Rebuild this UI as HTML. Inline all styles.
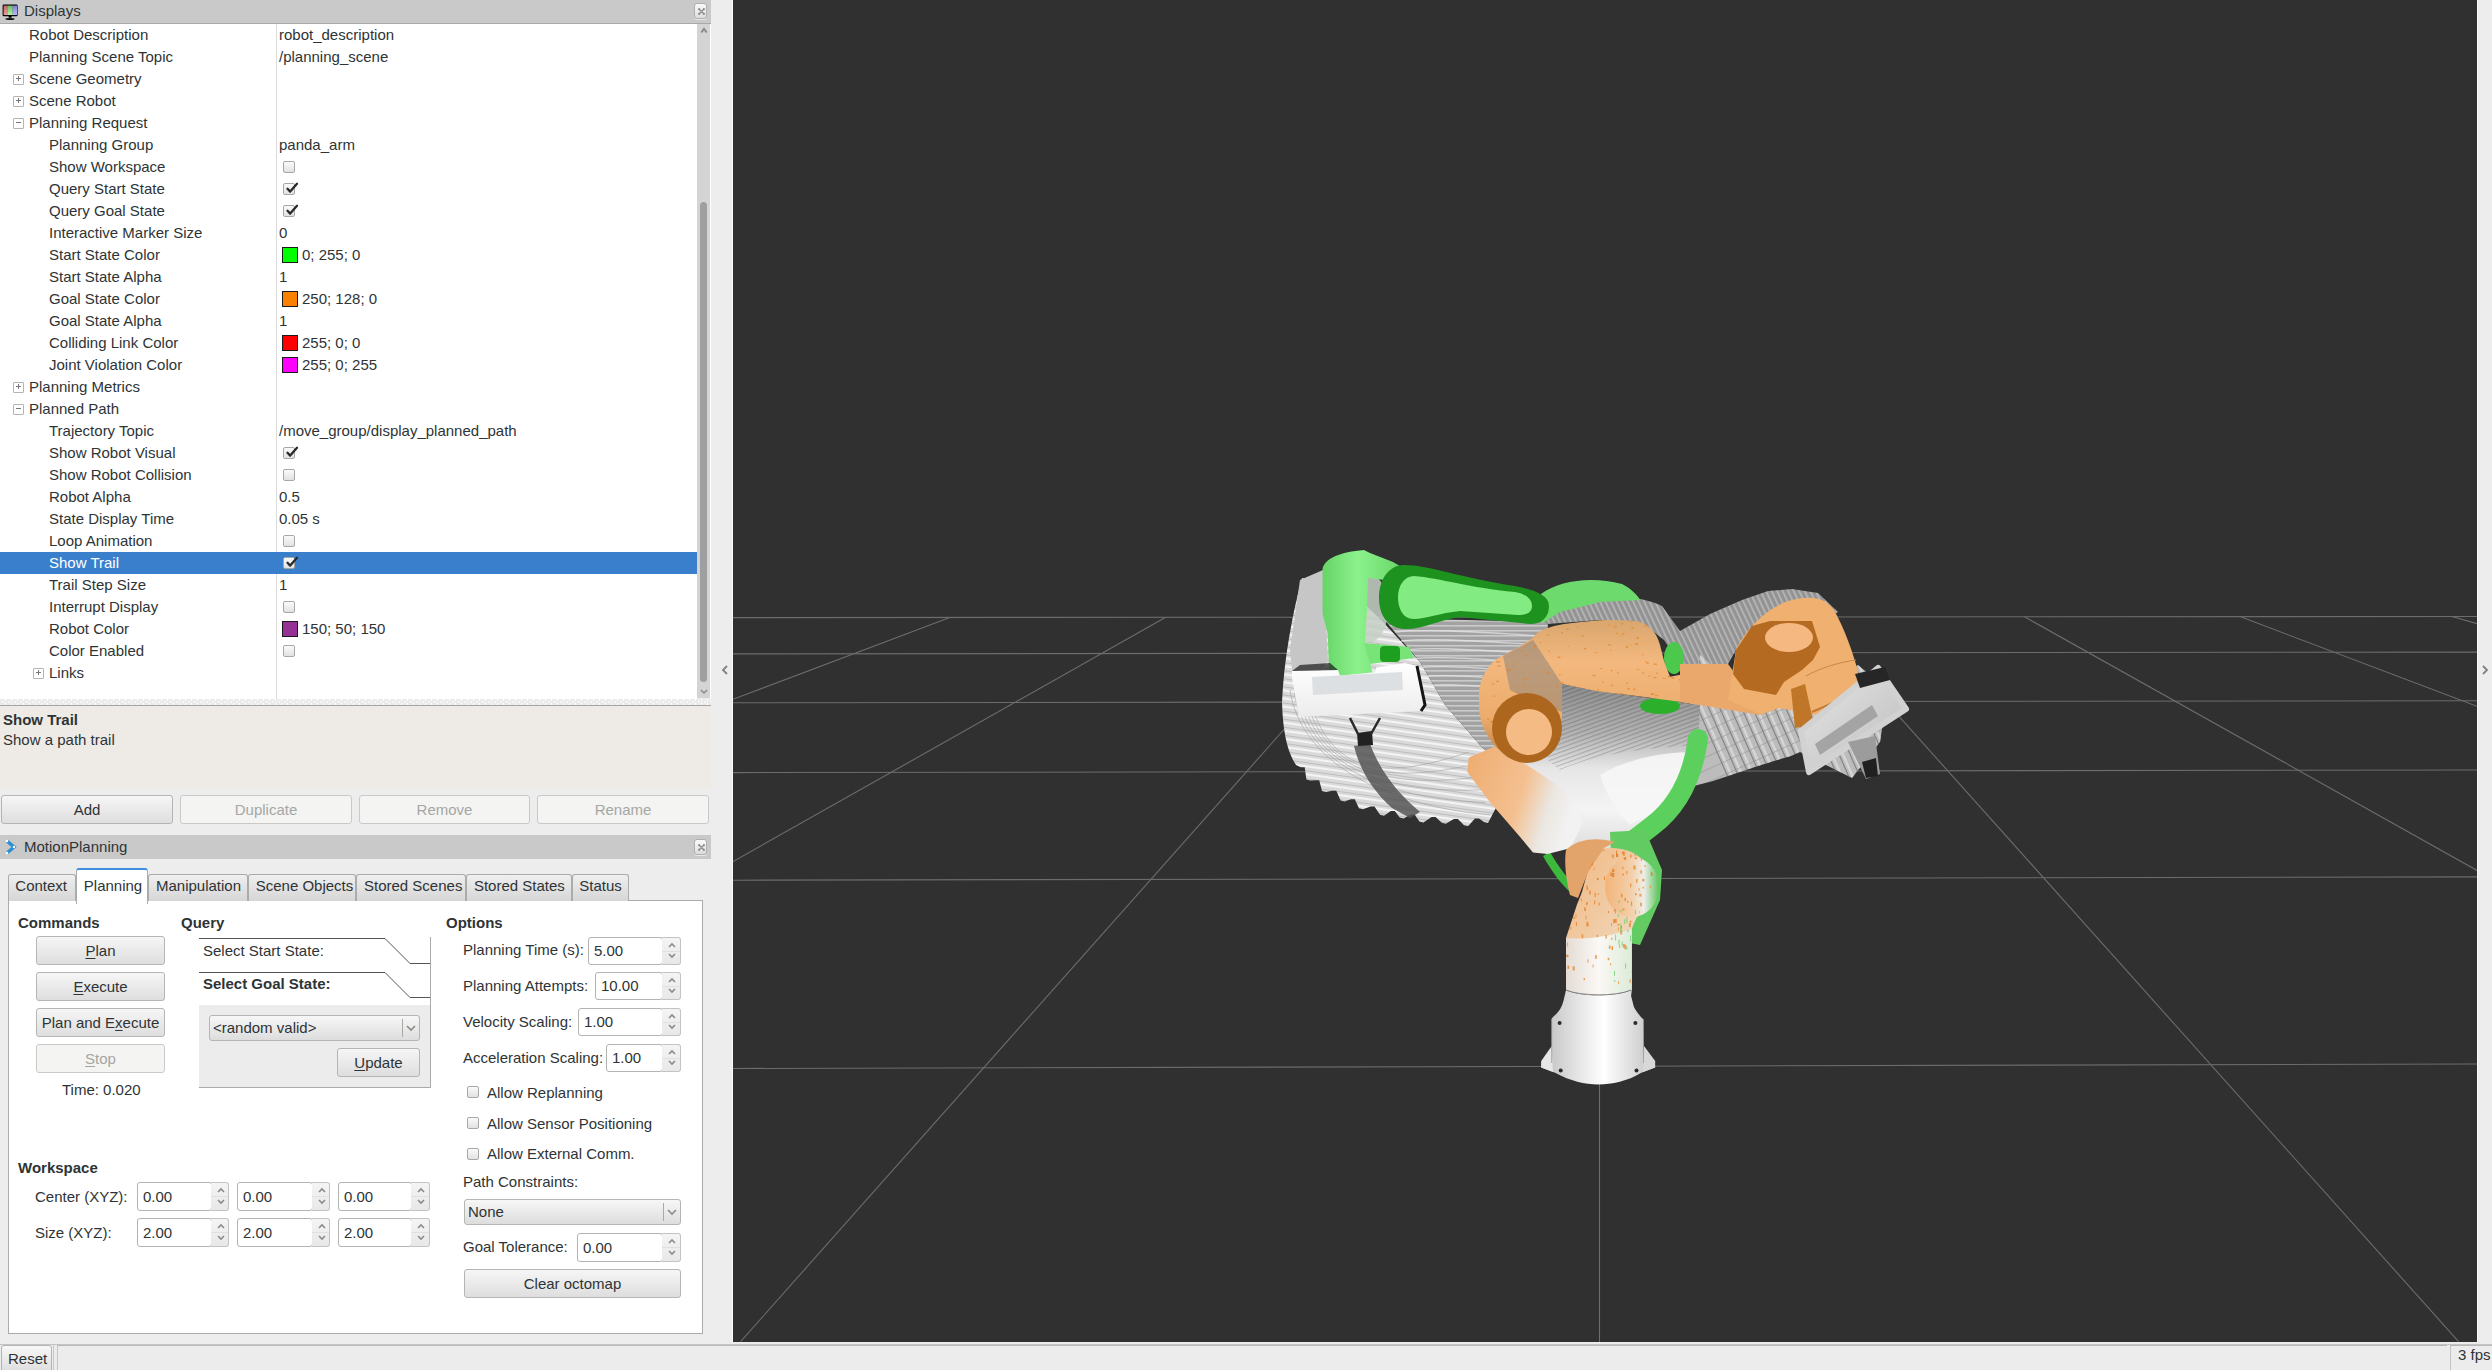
<!DOCTYPE html><html><head><meta charset="utf-8"><style>html,body{margin:0;padding:0;}body{width:2492px;height:1370px;overflow:hidden;position:relative;background:#ededed;font-family:"Liberation Sans",sans-serif;font-size:15px;color:#2e3436;}</style></head><body>
<div style="position:absolute;left:0px;top:0px;width:711px;height:23px;background:#c9c9c9;"></div>
<div style="position:absolute;left:0px;top:23px;width:711px;height:1px;background:#a9a9a9;"></div>
<svg style="position:absolute;left:2px;top:3px" width="16" height="17" viewBox="0 0 16 17"><defs><linearGradient id="mr" x1="0" y1="0" x2="0" y2="1"><stop offset="0" stop-color="#b86a6a"/><stop offset="1" stop-color="#f09a9a"/></linearGradient><linearGradient id="mg" x1="0" y1="0" x2="0" y2="1"><stop offset="0" stop-color="#6cb86c"/><stop offset="1" stop-color="#b0f4a8"/></linearGradient><linearGradient id="mb" x1="0" y1="0" x2="0" y2="1"><stop offset="0" stop-color="#8080d0"/><stop offset="1" stop-color="#b8b8ff"/></linearGradient></defs><rect x="0.6" y="1.6" width="15" height="11.6" rx="1.2" fill="#000"/><rect x="1.6" y="2.6" width="4.4" height="9.4" fill="url(#mr)"/><rect x="6" y="2.6" width="4.8" height="9.4" fill="url(#mg)"/><rect x="10.8" y="2.6" width="4.2" height="9.4" fill="url(#mb)"/><path d="M6.5 13 L9.7 13 L9.5 14.8 L6.7 14.8 Z" fill="#000"/><ellipse cx="8" cy="16" rx="4.6" ry="1.0" fill="#111"/></svg>
<div style="position:absolute;left:24px;top:1.60px;font-size:15px;line-height:18px;font-weight:normal;color:#2e3436;white-space:nowrap;">Displays</div>
<div style="position:absolute;left:694px;top:3px;width:11px;height:14px;border:1px solid #aeb1ac;border-radius:3px;background:linear-gradient(#fafafa,#dcdcdc);box-shadow:0 1px 0 #e8e8e8;"></div>
<svg style="position:absolute;left:697.5px;top:7.5px" width="7" height="7" viewBox="0 0 7 7"><path d="M1 1 L6 6 M6 1 L1 6" stroke="#8a8c88" stroke-width="1.3" stroke-linecap="round"/><circle cx="1.2" cy="1.2" r="1" fill="#858782"/><circle cx="5.8" cy="1.2" r="1" fill="#858782"/><circle cx="1.2" cy="5.8" r="1" fill="#858782"/><circle cx="5.8" cy="5.8" r="1" fill="#858782"/><rect x="2.5" y="2.5" width="2" height="2" fill="#a0a39e"/></svg>
<div style="position:absolute;left:0px;top:24px;width:697px;height:675px;background:#ffffff;"></div>
<div style="position:absolute;left:276px;top:24px;width:1px;height:675px;background:#dcdcdc;"></div>
<div style="position:absolute;left:29px;top:25.80px;font-size:15px;line-height:18px;font-weight:normal;color:#2e3436;white-space:nowrap;">Robot Description</div>
<div style="position:absolute;left:279px;top:25.80px;font-size:15px;line-height:18px;font-weight:normal;color:#2e3436;white-space:nowrap;">robot_description</div>
<div style="position:absolute;left:29px;top:47.80px;font-size:15px;line-height:18px;font-weight:normal;color:#2e3436;white-space:nowrap;">Planning Scene Topic</div>
<div style="position:absolute;left:279px;top:47.80px;font-size:15px;line-height:18px;font-weight:normal;color:#2e3436;white-space:nowrap;">/planning_scene</div>
<div style="position:absolute;left:29px;top:69.80px;font-size:15px;line-height:18px;font-weight:normal;color:#2e3436;white-space:nowrap;">Scene Geometry</div>
<div style="position:absolute;left:13px;top:74px;width:9px;height:9px;border:1px solid #b4b4b4;border-radius:1px;background:#fff;"></div>
<div style="position:absolute;left:16px;top:78px;width:5px;height:1px;background:#777;"></div>
<div style="position:absolute;left:18px;top:76px;width:1px;height:5px;background:#777;"></div>
<div style="position:absolute;left:29px;top:91.80px;font-size:15px;line-height:18px;font-weight:normal;color:#2e3436;white-space:nowrap;">Scene Robot</div>
<div style="position:absolute;left:13px;top:96px;width:9px;height:9px;border:1px solid #b4b4b4;border-radius:1px;background:#fff;"></div>
<div style="position:absolute;left:16px;top:100px;width:5px;height:1px;background:#777;"></div>
<div style="position:absolute;left:18px;top:98px;width:1px;height:5px;background:#777;"></div>
<div style="position:absolute;left:29px;top:113.80px;font-size:15px;line-height:18px;font-weight:normal;color:#2e3436;white-space:nowrap;">Planning Request</div>
<div style="position:absolute;left:13px;top:118px;width:9px;height:9px;border:1px solid #b4b4b4;border-radius:1px;background:#fff;"></div>
<div style="position:absolute;left:16px;top:122px;width:5px;height:1px;background:#777;"></div>
<div style="position:absolute;left:49px;top:135.80px;font-size:15px;line-height:18px;font-weight:normal;color:#2e3436;white-space:nowrap;">Planning Group</div>
<div style="position:absolute;left:279px;top:135.80px;font-size:15px;line-height:18px;font-weight:normal;color:#2e3436;white-space:nowrap;">panda_arm</div>
<div style="position:absolute;left:49px;top:157.80px;font-size:15px;line-height:18px;font-weight:normal;color:#2e3436;white-space:nowrap;">Show Workspace</div>
<div style="position:absolute;left:283px;top:161px;width:10px;height:10px;border:1px solid #a6a8a4;border-radius:2px;background:linear-gradient(#fafafa,#e2e2e2);"></div>
<div style="position:absolute;left:49px;top:179.80px;font-size:15px;line-height:18px;font-weight:normal;color:#2e3436;white-space:nowrap;">Query Start State</div>
<div style="position:absolute;left:283px;top:183px;width:10px;height:10px;border:1px solid #a6a8a4;border-radius:2px;background:linear-gradient(#fafafa,#e2e2e2);"><svg width="14" height="13" viewBox="0 0 14 13" style="position:absolute;left:1px;top:-2px"><path d="M2.5 6.8 L5.2 9.6 L12 1.8" fill="none" stroke="#2a2a2a" stroke-width="2.3" stroke-linecap="round" stroke-linejoin="round"/></svg></div>
<div style="position:absolute;left:49px;top:201.80px;font-size:15px;line-height:18px;font-weight:normal;color:#2e3436;white-space:nowrap;">Query Goal State</div>
<div style="position:absolute;left:283px;top:205px;width:10px;height:10px;border:1px solid #a6a8a4;border-radius:2px;background:linear-gradient(#fafafa,#e2e2e2);"><svg width="14" height="13" viewBox="0 0 14 13" style="position:absolute;left:1px;top:-2px"><path d="M2.5 6.8 L5.2 9.6 L12 1.8" fill="none" stroke="#2a2a2a" stroke-width="2.3" stroke-linecap="round" stroke-linejoin="round"/></svg></div>
<div style="position:absolute;left:49px;top:223.80px;font-size:15px;line-height:18px;font-weight:normal;color:#2e3436;white-space:nowrap;">Interactive Marker Size</div>
<div style="position:absolute;left:279px;top:223.80px;font-size:15px;line-height:18px;font-weight:normal;color:#2e3436;white-space:nowrap;">0</div>
<div style="position:absolute;left:49px;top:245.80px;font-size:15px;line-height:18px;font-weight:normal;color:#2e3436;white-space:nowrap;">Start State Color</div>
<div style="position:absolute;left:282px;top:247px;width:14px;height:14px;background:#00ff00;border:1px solid #1a1a1a;"></div>
<div style="position:absolute;left:302px;top:245.80px;font-size:15px;line-height:18px;font-weight:normal;color:#2e3436;white-space:nowrap;">0; 255; 0</div>
<div style="position:absolute;left:49px;top:267.80px;font-size:15px;line-height:18px;font-weight:normal;color:#2e3436;white-space:nowrap;">Start State Alpha</div>
<div style="position:absolute;left:279px;top:267.80px;font-size:15px;line-height:18px;font-weight:normal;color:#2e3436;white-space:nowrap;">1</div>
<div style="position:absolute;left:49px;top:289.80px;font-size:15px;line-height:18px;font-weight:normal;color:#2e3436;white-space:nowrap;">Goal State Color</div>
<div style="position:absolute;left:282px;top:291px;width:14px;height:14px;background:#fa8000;border:1px solid #1a1a1a;"></div>
<div style="position:absolute;left:302px;top:289.80px;font-size:15px;line-height:18px;font-weight:normal;color:#2e3436;white-space:nowrap;">250; 128; 0</div>
<div style="position:absolute;left:49px;top:311.80px;font-size:15px;line-height:18px;font-weight:normal;color:#2e3436;white-space:nowrap;">Goal State Alpha</div>
<div style="position:absolute;left:279px;top:311.80px;font-size:15px;line-height:18px;font-weight:normal;color:#2e3436;white-space:nowrap;">1</div>
<div style="position:absolute;left:49px;top:333.80px;font-size:15px;line-height:18px;font-weight:normal;color:#2e3436;white-space:nowrap;">Colliding Link Color</div>
<div style="position:absolute;left:282px;top:335px;width:14px;height:14px;background:#ff0000;border:1px solid #1a1a1a;"></div>
<div style="position:absolute;left:302px;top:333.80px;font-size:15px;line-height:18px;font-weight:normal;color:#2e3436;white-space:nowrap;">255; 0; 0</div>
<div style="position:absolute;left:49px;top:355.80px;font-size:15px;line-height:18px;font-weight:normal;color:#2e3436;white-space:nowrap;">Joint Violation Color</div>
<div style="position:absolute;left:282px;top:357px;width:14px;height:14px;background:#ff00ff;border:1px solid #1a1a1a;"></div>
<div style="position:absolute;left:302px;top:355.80px;font-size:15px;line-height:18px;font-weight:normal;color:#2e3436;white-space:nowrap;">255; 0; 255</div>
<div style="position:absolute;left:29px;top:377.80px;font-size:15px;line-height:18px;font-weight:normal;color:#2e3436;white-space:nowrap;">Planning Metrics</div>
<div style="position:absolute;left:13px;top:382px;width:9px;height:9px;border:1px solid #b4b4b4;border-radius:1px;background:#fff;"></div>
<div style="position:absolute;left:16px;top:386px;width:5px;height:1px;background:#777;"></div>
<div style="position:absolute;left:18px;top:384px;width:1px;height:5px;background:#777;"></div>
<div style="position:absolute;left:29px;top:399.80px;font-size:15px;line-height:18px;font-weight:normal;color:#2e3436;white-space:nowrap;">Planned Path</div>
<div style="position:absolute;left:13px;top:404px;width:9px;height:9px;border:1px solid #b4b4b4;border-radius:1px;background:#fff;"></div>
<div style="position:absolute;left:16px;top:408px;width:5px;height:1px;background:#777;"></div>
<div style="position:absolute;left:49px;top:421.80px;font-size:15px;line-height:18px;font-weight:normal;color:#2e3436;white-space:nowrap;">Trajectory Topic</div>
<div style="position:absolute;left:279px;top:421.80px;font-size:15px;line-height:18px;font-weight:normal;color:#2e3436;white-space:nowrap;">/move_group/display_planned_path</div>
<div style="position:absolute;left:49px;top:443.80px;font-size:15px;line-height:18px;font-weight:normal;color:#2e3436;white-space:nowrap;">Show Robot Visual</div>
<div style="position:absolute;left:283px;top:447px;width:10px;height:10px;border:1px solid #a6a8a4;border-radius:2px;background:linear-gradient(#fafafa,#e2e2e2);"><svg width="14" height="13" viewBox="0 0 14 13" style="position:absolute;left:1px;top:-2px"><path d="M2.5 6.8 L5.2 9.6 L12 1.8" fill="none" stroke="#2a2a2a" stroke-width="2.3" stroke-linecap="round" stroke-linejoin="round"/></svg></div>
<div style="position:absolute;left:49px;top:465.80px;font-size:15px;line-height:18px;font-weight:normal;color:#2e3436;white-space:nowrap;">Show Robot Collision</div>
<div style="position:absolute;left:283px;top:469px;width:10px;height:10px;border:1px solid #a6a8a4;border-radius:2px;background:linear-gradient(#fafafa,#e2e2e2);"></div>
<div style="position:absolute;left:49px;top:487.80px;font-size:15px;line-height:18px;font-weight:normal;color:#2e3436;white-space:nowrap;">Robot Alpha</div>
<div style="position:absolute;left:279px;top:487.80px;font-size:15px;line-height:18px;font-weight:normal;color:#2e3436;white-space:nowrap;">0.5</div>
<div style="position:absolute;left:49px;top:509.80px;font-size:15px;line-height:18px;font-weight:normal;color:#2e3436;white-space:nowrap;">State Display Time</div>
<div style="position:absolute;left:279px;top:509.80px;font-size:15px;line-height:18px;font-weight:normal;color:#2e3436;white-space:nowrap;">0.05 s</div>
<div style="position:absolute;left:49px;top:531.80px;font-size:15px;line-height:18px;font-weight:normal;color:#2e3436;white-space:nowrap;">Loop Animation</div>
<div style="position:absolute;left:283px;top:535px;width:10px;height:10px;border:1px solid #a6a8a4;border-radius:2px;background:linear-gradient(#fafafa,#e2e2e2);"></div>
<div style="position:absolute;left:0px;top:552px;width:697px;height:22px;background:#3a7fcc;"></div>
<div style="position:absolute;left:49px;top:553.80px;font-size:15px;line-height:18px;font-weight:normal;color:#ffffff;white-space:nowrap;">Show Trail</div>
<div style="position:absolute;left:283px;top:557px;width:10px;height:10px;border:1px solid #a6a8a4;border-radius:2px;background:linear-gradient(#fafafa,#e2e2e2);"><svg width="14" height="13" viewBox="0 0 14 13" style="position:absolute;left:1px;top:-2px"><path d="M2.5 6.8 L5.2 9.6 L12 1.8" fill="none" stroke="#2a2a2a" stroke-width="2.3" stroke-linecap="round" stroke-linejoin="round"/></svg></div>
<div style="position:absolute;left:49px;top:575.80px;font-size:15px;line-height:18px;font-weight:normal;color:#2e3436;white-space:nowrap;">Trail Step Size</div>
<div style="position:absolute;left:279px;top:575.80px;font-size:15px;line-height:18px;font-weight:normal;color:#2e3436;white-space:nowrap;">1</div>
<div style="position:absolute;left:49px;top:597.80px;font-size:15px;line-height:18px;font-weight:normal;color:#2e3436;white-space:nowrap;">Interrupt Display</div>
<div style="position:absolute;left:283px;top:601px;width:10px;height:10px;border:1px solid #a6a8a4;border-radius:2px;background:linear-gradient(#fafafa,#e2e2e2);"></div>
<div style="position:absolute;left:49px;top:619.80px;font-size:15px;line-height:18px;font-weight:normal;color:#2e3436;white-space:nowrap;">Robot Color</div>
<div style="position:absolute;left:282px;top:621px;width:14px;height:14px;background:#963296;border:1px solid #1a1a1a;"></div>
<div style="position:absolute;left:302px;top:619.80px;font-size:15px;line-height:18px;font-weight:normal;color:#2e3436;white-space:nowrap;">150; 50; 150</div>
<div style="position:absolute;left:49px;top:641.80px;font-size:15px;line-height:18px;font-weight:normal;color:#2e3436;white-space:nowrap;">Color Enabled</div>
<div style="position:absolute;left:283px;top:645px;width:10px;height:10px;border:1px solid #a6a8a4;border-radius:2px;background:linear-gradient(#fafafa,#e2e2e2);"></div>
<div style="position:absolute;left:49px;top:663.80px;font-size:15px;line-height:18px;font-weight:normal;color:#2e3436;white-space:nowrap;">Links</div>
<div style="position:absolute;left:33px;top:668px;width:9px;height:9px;border:1px solid #b4b4b4;border-radius:1px;background:#fff;"></div>
<div style="position:absolute;left:36px;top:672px;width:5px;height:1px;background:#777;"></div>
<div style="position:absolute;left:38px;top:670px;width:1px;height:5px;background:#777;"></div>
<div style="position:absolute;left:697px;top:24px;width:13px;height:674px;background:#d4d4d4;"></div>
<div style="position:absolute;left:700px;top:202px;width:7px;height:480px;background:#9e9fa1;border-radius:3.5px;"></div>
<svg style="position:absolute;left:699px;top:26px" width="10" height="8" viewBox="0 0 10 8"><path d="M2.3 6.5 L5 3 L7.7 6.5" fill="none" stroke="#8a8c88" stroke-width="2"/></svg>
<svg style="position:absolute;left:699px;top:688px" width="10" height="8" viewBox="0 0 10 8"><path d="M2 2 L5 5 L8 2" fill="none" stroke="#8a8c88" stroke-width="1.5"/></svg>
<div style="position:absolute;left:710px;top:24px;width:1px;height:675px;background:#ffffff;"></div>
<svg style="position:absolute;left:0;top:699px" width="711" height="6"><defs><pattern id="spl" width="6" height="4" patternUnits="userSpaceOnUse" y="1"><rect width="6" height="4" fill="#ebebeb"/><rect x="5" y="0" width="1" height="1" fill="#fff"/><rect x="2" y="1" width="1" height="1" fill="#fff"/><rect x="3" y="2" width="1" height="1" fill="#fff"/><rect x="5" y="3" width="1" height="1" fill="#fff"/></pattern></defs><rect width="711" height="6" fill="url(#spl)"/></svg>
<div style="position:absolute;left:0px;top:705px;width:711px;height:1px;background:#a4a4a4;"></div>
<div style="position:absolute;left:0px;top:706px;width:711px;height:82px;background:#eeebe7;"></div>
<div style="position:absolute;left:3px;top:710.50px;font-size:15px;line-height:18px;font-weight:bold;color:#2e3436;white-space:nowrap;">Show Trail</div>
<div style="position:absolute;left:3px;top:730.70px;font-size:15px;line-height:18px;font-weight:normal;color:#2e3436;white-space:nowrap;">Show a path trail</div>
<div style="position:absolute;left:1px;top:795px;width:170px;height:27px;background:linear-gradient(#f6f6f6,#dedede);border:1px solid #b4b6b2;border-radius:3px;"></div>
<div style="position:absolute;left:1px;top:795px;width:172px;height:29px;line-height:29px;text-align:center;font-size:15px;color:#2e3436;white-space:nowrap;">Add</div>
<div style="position:absolute;left:180px;top:795px;width:170px;height:27px;background:#f4f4f3;border:1px solid #c9cac8;border-radius:3px;"></div>
<div style="position:absolute;left:180px;top:795px;width:172px;height:29px;line-height:29px;text-align:center;font-size:15px;color:#a5a7a3;white-space:nowrap;">Duplicate</div>
<div style="position:absolute;left:359px;top:795px;width:169px;height:27px;background:#f4f4f3;border:1px solid #c9cac8;border-radius:3px;"></div>
<div style="position:absolute;left:359px;top:795px;width:171px;height:29px;line-height:29px;text-align:center;font-size:15px;color:#a5a7a3;white-space:nowrap;">Remove</div>
<div style="position:absolute;left:537px;top:795px;width:170px;height:27px;background:#f4f4f3;border:1px solid #c9cac8;border-radius:3px;"></div>
<div style="position:absolute;left:537px;top:795px;width:172px;height:29px;line-height:29px;text-align:center;font-size:15px;color:#a5a7a3;white-space:nowrap;">Rename</div>
<div style="position:absolute;left:0px;top:835px;width:711px;height:24px;background:#c9c9c9;"></div>
<svg style="position:absolute;left:4px;top:838px" width="14" height="18" viewBox="0 0 14 18"><path d="M3 3 L10 9 L3 15" fill="none" stroke="#2b8fd0" stroke-width="3.4" stroke-linejoin="miter"/><circle cx="3" cy="3" r="1.3" fill="#fff"/><circle cx="3" cy="15" r="1.3" fill="#fff"/><circle cx="10" cy="9" r="1.2" fill="#fff"/></svg>
<div style="position:absolute;left:24px;top:838.30px;font-size:15px;line-height:18px;font-weight:normal;color:#2e3436;white-space:nowrap;">MotionPlanning</div>
<div style="position:absolute;left:694px;top:839px;width:11px;height:14px;border:1px solid #aeb1ac;border-radius:3px;background:linear-gradient(#fafafa,#dcdcdc);box-shadow:0 1px 0 #e8e8e8;"></div>
<svg style="position:absolute;left:697.5px;top:843.5px" width="7" height="7" viewBox="0 0 7 7"><path d="M1 1 L6 6 M6 1 L1 6" stroke="#8a8c88" stroke-width="1.3" stroke-linecap="round"/><circle cx="1.2" cy="1.2" r="1" fill="#858782"/><circle cx="5.8" cy="1.2" r="1" fill="#858782"/><circle cx="1.2" cy="5.8" r="1" fill="#858782"/><circle cx="5.8" cy="5.8" r="1" fill="#858782"/><rect x="2.5" y="2.5" width="2" height="2" fill="#a0a39e"/></svg>
<div style="position:absolute;left:8px;top:900px;width:693px;height:432px;background:#ffffff;border:1px solid #aaacaa;"></div>
<div style="position:absolute;left:8px;top:874px;width:66px;height:26px;background:linear-gradient(#efefef,#d6d6d6);border:1px solid #aaacaa;border-bottom:none;border-radius:3px 3px 0 0;"></div>
<div style="position:absolute;left:15.3px;top:877.30px;font-size:15px;line-height:18px;font-weight:normal;color:#2e3436;white-space:nowrap;">Context</div>
<div style="position:absolute;left:76px;top:868px;width:70px;height:34px;background:#ffffff;border:1px solid #aaacaa;border-bottom:none;border-top:2px solid #3d8ee0;border-radius:3px 3px 0 0;"></div>
<div style="position:absolute;left:83.8px;top:876.50px;font-size:15px;line-height:18px;font-weight:normal;color:#2e3436;white-space:nowrap;">Planning</div>
<div style="position:absolute;left:148px;top:874px;width:98px;height:26px;background:linear-gradient(#efefef,#d6d6d6);border:1px solid #aaacaa;border-bottom:none;border-radius:3px 3px 0 0;"></div>
<div style="position:absolute;left:156px;top:877.30px;font-size:15px;line-height:18px;font-weight:normal;color:#2e3436;white-space:nowrap;">Manipulation</div>
<div style="position:absolute;left:248px;top:874px;width:106px;height:26px;background:linear-gradient(#efefef,#d6d6d6);border:1px solid #aaacaa;border-bottom:none;border-radius:3px 3px 0 0;"></div>
<div style="position:absolute;left:255.7px;top:877.30px;font-size:15px;line-height:18px;font-weight:normal;color:#2e3436;white-space:nowrap;">Scene Objects</div>
<div style="position:absolute;left:356px;top:874px;width:108px;height:26px;background:linear-gradient(#efefef,#d6d6d6);border:1px solid #aaacaa;border-bottom:none;border-radius:3px 3px 0 0;"></div>
<div style="position:absolute;left:364px;top:877.30px;font-size:15px;line-height:18px;font-weight:normal;color:#2e3436;white-space:nowrap;">Stored Scenes</div>
<div style="position:absolute;left:466px;top:874px;width:104px;height:26px;background:linear-gradient(#efefef,#d6d6d6);border:1px solid #aaacaa;border-bottom:none;border-radius:3px 3px 0 0;"></div>
<div style="position:absolute;left:473.9px;top:877.30px;font-size:15px;line-height:18px;font-weight:normal;color:#2e3436;white-space:nowrap;">Stored States</div>
<div style="position:absolute;left:572px;top:874px;width:55px;height:26px;background:linear-gradient(#efefef,#d6d6d6);border:1px solid #aaacaa;border-bottom:none;border-radius:3px 3px 0 0;"></div>
<div style="position:absolute;left:579.3px;top:877.30px;font-size:15px;line-height:18px;font-weight:normal;color:#2e3436;white-space:nowrap;">Status</div>
<div style="position:absolute;left:18px;top:913.80px;font-size:15px;line-height:18px;font-weight:bold;color:#2e3436;white-space:nowrap;">Commands</div>
<div style="position:absolute;left:181px;top:913.80px;font-size:15px;line-height:18px;font-weight:bold;color:#2e3436;white-space:nowrap;">Query</div>
<div style="position:absolute;left:446px;top:913.80px;font-size:15px;line-height:18px;font-weight:bold;color:#2e3436;white-space:nowrap;">Options</div>
<div style="position:absolute;left:36px;top:936px;width:127px;height:27px;background:linear-gradient(#f6f6f6,#dedede);border:1px solid #b4b6b2;border-radius:3px;"></div>
<div style="position:absolute;left:36px;top:936px;width:129px;height:29px;line-height:29px;text-align:center;font-size:15px;color:#2e3436;white-space:nowrap;"><span style="text-decoration:underline;text-underline-offset:2px">P</span>lan</div>
<div style="position:absolute;left:36px;top:972px;width:127px;height:27px;background:linear-gradient(#f6f6f6,#dedede);border:1px solid #b4b6b2;border-radius:3px;"></div>
<div style="position:absolute;left:36px;top:972px;width:129px;height:29px;line-height:29px;text-align:center;font-size:15px;color:#2e3436;white-space:nowrap;"><span style="text-decoration:underline;text-underline-offset:2px">E</span>xecute</div>
<div style="position:absolute;left:36px;top:1008px;width:127px;height:27px;background:linear-gradient(#f6f6f6,#dedede);border:1px solid #b4b6b2;border-radius:3px;"></div>
<div style="position:absolute;left:36px;top:1008px;width:129px;height:29px;line-height:29px;text-align:center;font-size:15px;color:#2e3436;white-space:nowrap;">Plan and E<span style="text-decoration:underline;text-underline-offset:2px">x</span>ecute</div>
<div style="position:absolute;left:36px;top:1044px;width:127px;height:27px;background:#f4f4f3;border:1px solid #c9cac8;border-radius:3px;"></div>
<div style="position:absolute;left:36px;top:1044px;width:129px;height:29px;line-height:29px;text-align:center;font-size:15px;color:#a5a7a3;white-space:nowrap;"><span style="text-decoration:underline;text-underline-offset:2px">S</span>top</div>
<div style="position:absolute;left:62px;top:1080.80px;font-size:15px;line-height:18px;font-weight:normal;color:#2e3436;white-space:nowrap;">Time: 0.020</div>
<div style="position:absolute;left:199px;top:1005px;width:231px;height:82px;background:#ececec;"></div>
<svg style="position:absolute;left:190px;top:930px" width="250" height="170" viewBox="190 930 250 170"><path d="M199 938.5 L385 938.5 L410 963.5 L430.5 963.5" fill="none" stroke="#555" stroke-width="1"/><path d="M199 972.5 L385 972.5 L410 997.5 L430.5 997.5" fill="none" stroke="#555" stroke-width="1"/><path d="M430.5 937 L430.5 1087.5 L199 1087.5" fill="none" stroke="#a9aba8" stroke-width="1"/></svg>
<div style="position:absolute;left:203px;top:941.80px;font-size:15px;line-height:18px;font-weight:normal;color:#2e3436;white-space:nowrap;">Select Start State:</div>
<div style="position:absolute;left:203px;top:975.20px;font-size:15px;line-height:18px;font-weight:bold;color:#2e3436;white-space:nowrap;">Select Goal State:</div>
<div style="position:absolute;left:209px;top:1015px;width:209px;height:24px;border:1px solid #b4b6b2;border-radius:3px;background:linear-gradient(#f7f7f7,#dddddd);"></div>
<div style="position:absolute;left:402px;top:1019px;width:1px;height:18px;background:#a8aaa6;"></div>
<svg style="position:absolute;left:405.0px;top:1024.0px" width="12" height="8" viewBox="0 0 12 8"><path d="M2 2 L6 6 L10 2" fill="none" stroke="#8a8c88" stroke-width="1.6"/></svg>
<div style="position:absolute;left:213px;top:1019.30px;font-size:15px;line-height:18px;font-weight:normal;color:#2e3436;white-space:nowrap;">&lt;random valid&gt;</div>
<div style="position:absolute;left:337px;top:1048px;width:81px;height:27px;background:linear-gradient(#f6f6f6,#dedede);border:1px solid #b4b6b2;border-radius:3px;"></div>
<div style="position:absolute;left:337px;top:1048px;width:83px;height:29px;line-height:29px;text-align:center;font-size:15px;color:#2e3436;white-space:nowrap;"><span style="text-decoration:underline;text-underline-offset:2px">U</span>pdate</div>
<div style="position:absolute;left:463px;top:941.30px;font-size:15px;line-height:18px;font-weight:normal;color:#2e3436;white-space:nowrap;">Planning Time (s):</div>
<div style="position:absolute;left:588px;top:937px;width:73px;height:26px;border:1px solid #b2b4b0;border-radius:3px;background:#fff;"></div>
<div style="position:absolute;left:662px;top:937px;width:18px;height:26px;border:1px solid #c2c4c0;border-left:none;border-radius:0 3px 3px 0;background:linear-gradient(#f4f4f4,#e8e8e8);"></div>
<div style="position:absolute;left:662px;top:951px;width:18px;height:1px;background:#e0e0e0;"></div>
<svg style="position:absolute;left:667.0px;top:941px" width="10" height="20" viewBox="0 0 10 20"><path d="M2 6 L5 3 L8 6" fill="none" stroke="#8a8c88" stroke-width="1.6"/><path d="M2 13 L5 16 L8 13" fill="none" stroke="#8a8c88" stroke-width="1.6"/></svg>
<div style="position:absolute;left:594px;top:942.30px;font-size:15px;line-height:18px;font-weight:normal;color:#2e3436;white-space:nowrap;">5.00</div>
<div style="position:absolute;left:463px;top:977.30px;font-size:15px;line-height:18px;font-weight:normal;color:#2e3436;white-space:nowrap;">Planning Attempts:</div>
<div style="position:absolute;left:595px;top:972px;width:66px;height:26px;border:1px solid #b2b4b0;border-radius:3px;background:#fff;"></div>
<div style="position:absolute;left:662px;top:972px;width:18px;height:26px;border:1px solid #c2c4c0;border-left:none;border-radius:0 3px 3px 0;background:linear-gradient(#f4f4f4,#e8e8e8);"></div>
<div style="position:absolute;left:662px;top:986px;width:18px;height:1px;background:#e0e0e0;"></div>
<svg style="position:absolute;left:667.0px;top:976px" width="10" height="20" viewBox="0 0 10 20"><path d="M2 6 L5 3 L8 6" fill="none" stroke="#8a8c88" stroke-width="1.6"/><path d="M2 13 L5 16 L8 13" fill="none" stroke="#8a8c88" stroke-width="1.6"/></svg>
<div style="position:absolute;left:601px;top:977.30px;font-size:15px;line-height:18px;font-weight:normal;color:#2e3436;white-space:nowrap;">10.00</div>
<div style="position:absolute;left:463px;top:1013.30px;font-size:15px;line-height:18px;font-weight:normal;color:#2e3436;white-space:nowrap;">Velocity Scaling:</div>
<div style="position:absolute;left:578px;top:1008px;width:83px;height:26px;border:1px solid #b2b4b0;border-radius:3px;background:#fff;"></div>
<div style="position:absolute;left:662px;top:1008px;width:18px;height:26px;border:1px solid #c2c4c0;border-left:none;border-radius:0 3px 3px 0;background:linear-gradient(#f4f4f4,#e8e8e8);"></div>
<div style="position:absolute;left:662px;top:1022px;width:18px;height:1px;background:#e0e0e0;"></div>
<svg style="position:absolute;left:667.0px;top:1012px" width="10" height="20" viewBox="0 0 10 20"><path d="M2 6 L5 3 L8 6" fill="none" stroke="#8a8c88" stroke-width="1.6"/><path d="M2 13 L5 16 L8 13" fill="none" stroke="#8a8c88" stroke-width="1.6"/></svg>
<div style="position:absolute;left:584px;top:1013.30px;font-size:15px;line-height:18px;font-weight:normal;color:#2e3436;white-space:nowrap;">1.00</div>
<div style="position:absolute;left:463px;top:1049.30px;font-size:15px;line-height:18px;font-weight:normal;color:#2e3436;white-space:nowrap;">Acceleration Scaling:</div>
<div style="position:absolute;left:606px;top:1044px;width:55px;height:26px;border:1px solid #b2b4b0;border-radius:3px;background:#fff;"></div>
<div style="position:absolute;left:662px;top:1044px;width:18px;height:26px;border:1px solid #c2c4c0;border-left:none;border-radius:0 3px 3px 0;background:linear-gradient(#f4f4f4,#e8e8e8);"></div>
<div style="position:absolute;left:662px;top:1058px;width:18px;height:1px;background:#e0e0e0;"></div>
<svg style="position:absolute;left:667.0px;top:1048px" width="10" height="20" viewBox="0 0 10 20"><path d="M2 6 L5 3 L8 6" fill="none" stroke="#8a8c88" stroke-width="1.6"/><path d="M2 13 L5 16 L8 13" fill="none" stroke="#8a8c88" stroke-width="1.6"/></svg>
<div style="position:absolute;left:612px;top:1049.30px;font-size:15px;line-height:18px;font-weight:normal;color:#2e3436;white-space:nowrap;">1.00</div>
<div style="position:absolute;left:467px;top:1086px;width:10px;height:10px;border:1px solid #a6a8a4;border-radius:2px;background:linear-gradient(#fafafa,#e2e2e2);"></div>
<div style="position:absolute;left:487px;top:1083.50px;font-size:15px;line-height:18px;font-weight:normal;color:#2e3436;white-space:nowrap;">Allow Replanning</div>
<div style="position:absolute;left:467px;top:1117px;width:10px;height:10px;border:1px solid #a6a8a4;border-radius:2px;background:linear-gradient(#fafafa,#e2e2e2);"></div>
<div style="position:absolute;left:487px;top:1114.70px;font-size:15px;line-height:18px;font-weight:normal;color:#2e3436;white-space:nowrap;">Allow Sensor Positioning</div>
<div style="position:absolute;left:467px;top:1148px;width:10px;height:10px;border:1px solid #a6a8a4;border-radius:2px;background:linear-gradient(#fafafa,#e2e2e2);"></div>
<div style="position:absolute;left:487px;top:1145.40px;font-size:15px;line-height:18px;font-weight:normal;color:#2e3436;white-space:nowrap;">Allow External Comm.</div>
<div style="position:absolute;left:463px;top:1173.40px;font-size:15px;line-height:18px;font-weight:normal;color:#2e3436;white-space:nowrap;">Path Constraints:</div>
<div style="position:absolute;left:464px;top:1199px;width:215px;height:24px;border:1px solid #b4b6b2;border-radius:3px;background:linear-gradient(#f7f7f7,#dddddd);"></div>
<div style="position:absolute;left:663px;top:1203px;width:1px;height:18px;background:#a8aaa6;"></div>
<svg style="position:absolute;left:666.0px;top:1208.0px" width="12" height="8" viewBox="0 0 12 8"><path d="M2 2 L6 6 L10 2" fill="none" stroke="#8a8c88" stroke-width="1.6"/></svg>
<div style="position:absolute;left:468px;top:1203.30px;font-size:15px;line-height:18px;font-weight:normal;color:#2e3436;white-space:nowrap;">None</div>
<div style="position:absolute;left:463px;top:1238.20px;font-size:15px;line-height:18px;font-weight:normal;color:#2e3436;white-space:nowrap;">Goal Tolerance:</div>
<div style="position:absolute;left:577px;top:1233px;width:84px;height:27px;border:1px solid #b2b4b0;border-radius:3px;background:#fff;"></div>
<div style="position:absolute;left:662px;top:1233px;width:18px;height:27px;border:1px solid #c2c4c0;border-left:none;border-radius:0 3px 3px 0;background:linear-gradient(#f4f4f4,#e8e8e8);"></div>
<div style="position:absolute;left:662px;top:1247px;width:18px;height:1px;background:#e0e0e0;"></div>
<svg style="position:absolute;left:667.0px;top:1237px" width="10" height="21" viewBox="0 0 10 21"><path d="M2 6 L5 3 L8 6" fill="none" stroke="#8a8c88" stroke-width="1.6"/><path d="M2 14 L5 17 L8 14" fill="none" stroke="#8a8c88" stroke-width="1.6"/></svg>
<div style="position:absolute;left:583px;top:1238.80px;font-size:15px;line-height:18px;font-weight:normal;color:#2e3436;white-space:nowrap;">0.00</div>
<div style="position:absolute;left:464px;top:1269px;width:215px;height:27px;background:linear-gradient(#f6f6f6,#dedede);border:1px solid #b4b6b2;border-radius:3px;"></div>
<div style="position:absolute;left:464px;top:1269px;width:217px;height:29px;line-height:29px;text-align:center;font-size:15px;color:#2e3436;white-space:nowrap;">Clear octomap</div>
<div style="position:absolute;left:18px;top:1159.30px;font-size:15px;line-height:18px;font-weight:bold;color:#2e3436;white-space:nowrap;">Workspace</div>
<div style="position:absolute;left:35px;top:1188.20px;font-size:15px;line-height:18px;font-weight:normal;color:#2e3436;white-space:nowrap;">Center (XYZ):</div>
<div style="position:absolute;left:35px;top:1223.80px;font-size:15px;line-height:18px;font-weight:normal;color:#2e3436;white-space:nowrap;">Size (XYZ):</div>
<div style="position:absolute;left:137px;top:1182px;width:73px;height:27px;border:1px solid #b2b4b0;border-radius:3px;background:#fff;"></div>
<div style="position:absolute;left:211px;top:1182px;width:17px;height:27px;border:1px solid #c2c4c0;border-left:none;border-radius:0 3px 3px 0;background:linear-gradient(#f4f4f4,#e8e8e8);"></div>
<div style="position:absolute;left:211px;top:1196px;width:17px;height:1px;background:#e0e0e0;"></div>
<svg style="position:absolute;left:215.5px;top:1186px" width="10" height="21" viewBox="0 0 10 21"><path d="M2 6 L5 3 L8 6" fill="none" stroke="#8a8c88" stroke-width="1.6"/><path d="M2 14 L5 17 L8 14" fill="none" stroke="#8a8c88" stroke-width="1.6"/></svg>
<div style="position:absolute;left:143px;top:1187.80px;font-size:15px;line-height:18px;font-weight:normal;color:#2e3436;white-space:nowrap;">0.00</div>
<div style="position:absolute;left:137px;top:1218px;width:73px;height:27px;border:1px solid #b2b4b0;border-radius:3px;background:#fff;"></div>
<div style="position:absolute;left:211px;top:1218px;width:17px;height:27px;border:1px solid #c2c4c0;border-left:none;border-radius:0 3px 3px 0;background:linear-gradient(#f4f4f4,#e8e8e8);"></div>
<div style="position:absolute;left:211px;top:1232px;width:17px;height:1px;background:#e0e0e0;"></div>
<svg style="position:absolute;left:215.5px;top:1222px" width="10" height="21" viewBox="0 0 10 21"><path d="M2 6 L5 3 L8 6" fill="none" stroke="#8a8c88" stroke-width="1.6"/><path d="M2 14 L5 17 L8 14" fill="none" stroke="#8a8c88" stroke-width="1.6"/></svg>
<div style="position:absolute;left:143px;top:1223.80px;font-size:15px;line-height:18px;font-weight:normal;color:#2e3436;white-space:nowrap;">2.00</div>
<div style="position:absolute;left:237px;top:1182px;width:74px;height:27px;border:1px solid #b2b4b0;border-radius:3px;background:#fff;"></div>
<div style="position:absolute;left:312px;top:1182px;width:17px;height:27px;border:1px solid #c2c4c0;border-left:none;border-radius:0 3px 3px 0;background:linear-gradient(#f4f4f4,#e8e8e8);"></div>
<div style="position:absolute;left:312px;top:1196px;width:17px;height:1px;background:#e0e0e0;"></div>
<svg style="position:absolute;left:316.5px;top:1186px" width="10" height="21" viewBox="0 0 10 21"><path d="M2 6 L5 3 L8 6" fill="none" stroke="#8a8c88" stroke-width="1.6"/><path d="M2 14 L5 17 L8 14" fill="none" stroke="#8a8c88" stroke-width="1.6"/></svg>
<div style="position:absolute;left:243px;top:1187.80px;font-size:15px;line-height:18px;font-weight:normal;color:#2e3436;white-space:nowrap;">0.00</div>
<div style="position:absolute;left:237px;top:1218px;width:74px;height:27px;border:1px solid #b2b4b0;border-radius:3px;background:#fff;"></div>
<div style="position:absolute;left:312px;top:1218px;width:17px;height:27px;border:1px solid #c2c4c0;border-left:none;border-radius:0 3px 3px 0;background:linear-gradient(#f4f4f4,#e8e8e8);"></div>
<div style="position:absolute;left:312px;top:1232px;width:17px;height:1px;background:#e0e0e0;"></div>
<svg style="position:absolute;left:316.5px;top:1222px" width="10" height="21" viewBox="0 0 10 21"><path d="M2 6 L5 3 L8 6" fill="none" stroke="#8a8c88" stroke-width="1.6"/><path d="M2 14 L5 17 L8 14" fill="none" stroke="#8a8c88" stroke-width="1.6"/></svg>
<div style="position:absolute;left:243px;top:1223.80px;font-size:15px;line-height:18px;font-weight:normal;color:#2e3436;white-space:nowrap;">2.00</div>
<div style="position:absolute;left:338px;top:1182px;width:72px;height:27px;border:1px solid #b2b4b0;border-radius:3px;background:#fff;"></div>
<div style="position:absolute;left:411px;top:1182px;width:18px;height:27px;border:1px solid #c2c4c0;border-left:none;border-radius:0 3px 3px 0;background:linear-gradient(#f4f4f4,#e8e8e8);"></div>
<div style="position:absolute;left:411px;top:1196px;width:18px;height:1px;background:#e0e0e0;"></div>
<svg style="position:absolute;left:416.0px;top:1186px" width="10" height="21" viewBox="0 0 10 21"><path d="M2 6 L5 3 L8 6" fill="none" stroke="#8a8c88" stroke-width="1.6"/><path d="M2 14 L5 17 L8 14" fill="none" stroke="#8a8c88" stroke-width="1.6"/></svg>
<div style="position:absolute;left:344px;top:1187.80px;font-size:15px;line-height:18px;font-weight:normal;color:#2e3436;white-space:nowrap;">0.00</div>
<div style="position:absolute;left:338px;top:1218px;width:72px;height:27px;border:1px solid #b2b4b0;border-radius:3px;background:#fff;"></div>
<div style="position:absolute;left:411px;top:1218px;width:18px;height:27px;border:1px solid #c2c4c0;border-left:none;border-radius:0 3px 3px 0;background:linear-gradient(#f4f4f4,#e8e8e8);"></div>
<div style="position:absolute;left:411px;top:1232px;width:18px;height:1px;background:#e0e0e0;"></div>
<svg style="position:absolute;left:416.0px;top:1222px" width="10" height="21" viewBox="0 0 10 21"><path d="M2 6 L5 3 L8 6" fill="none" stroke="#8a8c88" stroke-width="1.6"/><path d="M2 14 L5 17 L8 14" fill="none" stroke="#8a8c88" stroke-width="1.6"/></svg>
<div style="position:absolute;left:344px;top:1223.80px;font-size:15px;line-height:18px;font-weight:normal;color:#2e3436;white-space:nowrap;">2.00</div>
<div style="position:absolute;left:711px;top:0px;width:22px;height:1342px;background:#ededed;"></div>
<div style="position:absolute;left:732px;top:0px;width:1px;height:1342px;background:#fafafa;"></div>
<svg style="position:absolute;left:720px;top:664px" width="10" height="12" viewBox="0 0 10 12"><path d="M7 2 L3 6 L7 10" fill="none" stroke="#80827e" stroke-width="1.8"/></svg>
<div style="position:absolute;left:2477px;top:0px;width:15px;height:1342px;background:#ededed;"></div>
<div style="position:absolute;left:2477px;top:0px;width:1px;height:1342px;background:#fafafa;"></div>
<svg style="position:absolute;left:2480px;top:664px" width="10" height="12" viewBox="0 0 10 12"><path d="M3 2 L7 6 L3 10" fill="none" stroke="#80827e" stroke-width="1.8"/></svg>
<div style="position:absolute;left:0px;top:1342px;width:2492px;height:28px;background:#ececec;"></div>
<div style="position:absolute;left:0px;top:1344px;width:2492px;height:1px;background:#c4c4c4;"></div>
<div style="position:absolute;left:1px;top:1345px;width:49px;height:30px;border:1px solid #b4b6b2;border-radius:3px;background:linear-gradient(#f7f7f7,#dadada);"></div>
<div style="position:absolute;left:8px;top:1349.80px;font-size:15px;line-height:18px;font-weight:normal;color:#2e3436;white-space:nowrap;">Reset</div>
<div style="position:absolute;left:53px;top:1345px;width:1px;height:25px;background:#c8c8c8;"></div>
<div style="position:absolute;left:57px;top:1345px;width:2389px;height:25px;background:#ececec;border-top:1px solid #b8b8b8;border-left:1px solid #c4c4c4;"></div>
<div style="position:absolute;left:2450px;top:1345px;width:42px;height:25px;background:#ececec;border-top:1px solid #b8b8b8;border-left:1px solid #c4c4c4;"></div>
<div style="position:absolute;left:2458px;top:1345.80px;font-size:15px;line-height:18px;font-weight:normal;color:#2e3436;white-space:nowrap;">3 fps</div>
<div style="position:absolute;left:733px;top:0;width:1744px;height:1342px;background:#303030;overflow:hidden;"><svg width="1744" height="1342" viewBox="733 0 1744 1342" style="position:absolute;left:0;top:0">
<line x1="733" y1="617.6" x2="2477" y2="616.5" stroke="#6c6c6c" stroke-width="1.1"/>
<line x1="733" y1="653.9" x2="2477" y2="652.1" stroke="#6c6c6c" stroke-width="1.1"/>
<line x1="733" y1="702.8" x2="2477" y2="700.7" stroke="#6c6c6c" stroke-width="1.1"/>
<line x1="733" y1="772.6" x2="2477" y2="770.0" stroke="#6c6c6c" stroke-width="1.1"/>
<line x1="733" y1="880.2" x2="2477" y2="876.9" stroke="#6c6c6c" stroke-width="1.1"/>
<line x1="733" y1="1068.5" x2="2477" y2="1064.0" stroke="#6c6c6c" stroke-width="1.1"/>
<line x1="949.8" y1="617.4" x2="733" y2="699.3" stroke="#6c6c6c" stroke-width="1.1"/>
<line x1="1165.7" y1="617.3" x2="733" y2="861.6" stroke="#6c6c6c" stroke-width="1.1"/>
<line x1="1383.8" y1="617.1" x2="740.6" y2="1341.6" stroke="#6c6c6c" stroke-width="1.1"/>
<line x1="1599.5" y1="617" x2="1599.5" y2="1342" stroke="#6c6c6c" stroke-width="1.1"/>
<line x1="1810" y1="616.9" x2="2458.6" y2="1341.6" stroke="#6c6c6c" stroke-width="1.1"/>
<line x1="2024.5" y1="616.8" x2="2477" y2="870.4" stroke="#6c6c6c" stroke-width="1.1"/>
<line x1="2240" y1="616.6" x2="2477" y2="706.3" stroke="#6c6c6c" stroke-width="1.1"/>
<line x1="2452" y1="616.5" x2="2477" y2="623.6" stroke="#6c6c6c" stroke-width="1.1"/>
<defs>
<linearGradient id="gG" x1="0" y1="0" x2="1" y2="0"><stop offset="0" stop-color="#66d466"/><stop offset="0.45" stop-color="#8cf28c"/><stop offset="1" stop-color="#6ad86a"/></linearGradient>
<linearGradient id="gO" x1="0" y1="0" x2="0" y2="1"><stop offset="0" stop-color="#d9a66e"/><stop offset="0.3" stop-color="#f3b87e"/><stop offset="0.7" stop-color="#ecac6c"/><stop offset="1" stop-color="#bf7e3c"/></linearGradient>
<linearGradient id="gO2" x1="0" y1="0" x2="1" y2="0.3"><stop offset="0" stop-color="#eeac70"/><stop offset="0.55" stop-color="#f4c090"/><stop offset="0.8" stop-color="#ebe6e0"/><stop offset="1" stop-color="#f2f2f2"/></linearGradient>
<linearGradient id="gBase" x1="0" y1="0" x2="1" y2="0"><stop offset="0" stop-color="#bdbdbd"/><stop offset="0.3" stop-color="#e2e2e2"/><stop offset="0.55" stop-color="#ffffff"/><stop offset="0.85" stop-color="#d6d6d6"/><stop offset="1" stop-color="#bcbcbc"/></linearGradient>
<linearGradient id="gL1" x1="0" y1="0" x2="1" y2="0"><stop offset="0" stop-color="#e4dcd4"/><stop offset="0.5" stop-color="#fbf8f5"/><stop offset="1" stop-color="#dcebd8"/></linearGradient>
<linearGradient id="gL2" x1="0" y1="0" x2="1" y2="1"><stop offset="0" stop-color="#f0b880"/><stop offset="0.6" stop-color="#f1d2b2"/><stop offset="1" stop-color="#e8efe4"/></linearGradient>
<linearGradient id="gSh" x1="0" y1="0" x2="1" y2="0"><stop offset="0" stop-color="#f2b478"/><stop offset="0.5" stop-color="#f3d0ac"/><stop offset="0.72" stop-color="#eeeeea"/><stop offset="1" stop-color="#5cc45c"/></linearGradient>
<linearGradient id="gGrip" x1="0" y1="0" x2="0" y2="1"><stop offset="0" stop-color="#ffffff"/><stop offset="1" stop-color="#ececec"/></linearGradient>
<linearGradient id="gGripR" x1="0" y1="0" x2="1" y2="1"><stop offset="0" stop-color="#e6e6e6"/><stop offset="1" stop-color="#bdbdbd"/></linearGradient>
<linearGradient id="gGhost" x1="0" y1="0" x2="0" y2="1"><stop offset="0" stop-color="#9a9a9a"/><stop offset="0.35" stop-color="#cfcfcf"/><stop offset="0.6" stop-color="#f0f0f0"/><stop offset="1" stop-color="#e2e2e2"/></linearGradient>
<pattern id="stripes" width="6" height="5" patternUnits="userSpaceOnUse"><rect width="6" height="5" fill="#a2a2a2"/><rect y="0" width="6" height="1.6" fill="#cacaca"/></pattern>
<pattern id="stripesD" width="5" height="5" patternUnits="userSpaceOnUse" patternTransform="rotate(-25)"><rect width="5" height="5" fill="#939393"/><rect x="0" width="1.6" height="5" fill="#b9b9b9"/></pattern>
<pattern id="stripesL" width="7" height="8" patternUnits="userSpaceOnUse" patternTransform="rotate(8)"><rect width="7" height="8" fill="#dadada"/><rect y="0" width="7" height="2" fill="#f4f4f4"/><rect y="5" width="7" height="1" fill="#bdbdbd"/></pattern>
<pattern id="blocks" width="16" height="12" patternUnits="userSpaceOnUse" patternTransform="rotate(-35)"><rect width="16" height="12" fill="#c2c2c2"/><rect x="0" width="5" height="12" fill="#e0e0e0"/><rect x="11" width="2" height="12" fill="#8a8a8a"/><rect y="9" width="16" height="1.5" fill="#9a9a9a"/></pattern>
</defs>
<!-- ===== trail ghosts ===== -->
<!-- left fan -->
<path d="M1302,578 C1292,615 1284,660 1282,702 C1283,735 1288,752 1296,765 L1300.7,767.2 L1304.7,767.2 L1306.4,779.4 L1310.4,780.4 L1315.2,780.2 L1319.2,780.2 L1322.0,791.0 L1326.0,792.0 L1332.3,790.7 L1336.3,790.7 L1340.6,800.4 L1344.6,801.4 L1350.8,799.3 L1354.8,799.3 L1359.0,808.3 L1363.0,809.3 L1370.5,806.5 L1374.5,806.5 L1380.0,814.8 L1384.0,815.8 L1390.8,811.1 L1394.8,811.1 L1399.7,817.5 L1403.7,818.5 L1410.6,814.5 L1414.6,814.5 L1419.4,821.4 L1423.4,822.4 L1431.6,817.0 L1435.6,817.0 L1441.8,822.7 L1445.8,823.7 L1453.9,819.0 L1457.9,819.0 L1464.0,825.3 L1468.0,826.3 L1475.0,818.6 L1479.0,818.6 L1484.0,822.0 L1488.0,823.0 L1500,800 L1505,770 L1480,745 L1445,705 L1420,662 L1383,622 L1345,585 Z" fill="url(#stripesL)"/>
<path d="M1290.0,690.0 C1300.0,760.0 1380.0,805.0 1490.0,815.0" fill="none" stroke="#9a9a9a" stroke-width="0.9" opacity="0.6"/>
<path d="M1294.2,692.8 C1307.0,764.2 1382.8,799.4 1485.8,802.4" fill="none" stroke="#9a9a9a" stroke-width="0.9" opacity="0.6"/>
<path d="M1298.4,695.6 C1314.0,768.4 1385.6,793.8 1481.6,789.8" fill="none" stroke="#9a9a9a" stroke-width="0.9" opacity="0.6"/>
<path d="M1302.6,698.4 C1321.0,772.6 1388.4,788.2 1477.4,777.2" fill="none" stroke="#9a9a9a" stroke-width="0.9" opacity="0.6"/>
<path d="M1306.8,701.2 C1328.0,776.8 1391.2,782.6 1473.2,764.6" fill="none" stroke="#9a9a9a" stroke-width="0.9" opacity="0.6"/>
<path d="M1311.0,704.0 C1335.0,781.0 1394.0,777.0 1469.0,752.0" fill="none" stroke="#9a9a9a" stroke-width="0.9" opacity="0.6"/>
<path d="M1300,580 L1323,570 L1328,660 L1296,705 L1290,650 Z" fill="#c6c6c6"/>
<path d="M1354,746 C1360,770 1372,790 1392,808 L1410,818 L1420,812 C1400,795 1382,775 1370,744 Z" fill="#555" opacity="0.85"/>
<!-- mid striped (behind link6, between link7 and orange) -->
<path d="M1383,618 L1548,622 L1545,700 L1505,770 L1480,745 L1445,705 L1420,662 Z" fill="url(#stripes)"/>
<path d="M1395,632 C1440,628 1500,634 1546,636" fill="none" stroke="#e8e8e8" stroke-width="1.4" opacity="0.7"/>
<path d="M1401,641 C1440,637 1500,643 1546,645" fill="none" stroke="#e8e8e8" stroke-width="1.4" opacity="0.7"/>
<path d="M1407,650 C1440,646 1500,652 1546,654" fill="none" stroke="#e8e8e8" stroke-width="1.4" opacity="0.7"/>
<path d="M1413,659 C1440,655 1500,661 1546,663" fill="none" stroke="#e8e8e8" stroke-width="1.4" opacity="0.7"/>
<path d="M1419,668 C1440,664 1500,670 1546,672" fill="none" stroke="#e8e8e8" stroke-width="1.4" opacity="0.7"/>
<path d="M1425,677 C1440,673 1500,679 1546,681" fill="none" stroke="#e8e8e8" stroke-width="1.4" opacity="0.7"/>
<path d="M1431,686 C1440,682 1500,688 1546,690" fill="none" stroke="#e8e8e8" stroke-width="1.4" opacity="0.7"/>
<!-- top band right -->
<path d="M1541,622 C1555,608 1580,598 1610,597 C1630,596 1650,600 1662,606 L1680,631 L1710,614 L1742,600 L1768,591 L1792,589 L1818,593 L1838,612 L1815,626 L1752,626 L1736,650 L1728,664 L1680,664 L1664,640 L1642,623 L1600,620 L1547,624 Z" fill="url(#stripesD)"/>
<!-- lower right blocks -->
<clipPath id="cpBlocks"><path d="M1700,655 L1740,690 L1800,702 L1858,665 L1888,690 L1880,742 L1852,778 L1800,752 L1791,756 L1774,761 L1755,767 L1734,774 L1713,781 L1690,787 L1672,770 L1690,705 Z"/></clipPath>
<g clip-path="url(#cpBlocks)"><rect x="1660" y="640" width="240" height="160" fill="#bcbcbc"/><path d="M1668,640 L1738,800" stroke="#6e6e6e" stroke-width="1.2" opacity="0.7"/><path d="M1672,640 L1742,800" stroke="#e6e6e6" stroke-width="2.5" opacity="0.6"/><path d="M1679,640 L1749,800" stroke="#6e6e6e" stroke-width="1.2" opacity="0.7"/><path d="M1683,640 L1753,800" stroke="#e6e6e6" stroke-width="2.5" opacity="0.6"/><path d="M1690,640 L1760,800" stroke="#6e6e6e" stroke-width="1.2" opacity="0.7"/><path d="M1694,640 L1764,800" stroke="#e6e6e6" stroke-width="2.5" opacity="0.6"/><path d="M1701,640 L1771,800" stroke="#6e6e6e" stroke-width="1.2" opacity="0.7"/><path d="M1705,640 L1775,800" stroke="#e6e6e6" stroke-width="2.5" opacity="0.6"/><path d="M1712,640 L1782,800" stroke="#6e6e6e" stroke-width="1.2" opacity="0.7"/><path d="M1716,640 L1786,800" stroke="#e6e6e6" stroke-width="2.5" opacity="0.6"/><path d="M1723,640 L1793,800" stroke="#6e6e6e" stroke-width="1.2" opacity="0.7"/><path d="M1727,640 L1797,800" stroke="#e6e6e6" stroke-width="2.5" opacity="0.6"/><path d="M1734,640 L1804,800" stroke="#6e6e6e" stroke-width="1.2" opacity="0.7"/><path d="M1738,640 L1808,800" stroke="#e6e6e6" stroke-width="2.5" opacity="0.6"/><path d="M1745,640 L1815,800" stroke="#6e6e6e" stroke-width="1.2" opacity="0.7"/><path d="M1749,640 L1819,800" stroke="#e6e6e6" stroke-width="2.5" opacity="0.6"/><path d="M1756,640 L1826,800" stroke="#6e6e6e" stroke-width="1.2" opacity="0.7"/><path d="M1760,640 L1830,800" stroke="#e6e6e6" stroke-width="2.5" opacity="0.6"/><path d="M1767,640 L1837,800" stroke="#6e6e6e" stroke-width="1.2" opacity="0.7"/><path d="M1771,640 L1841,800" stroke="#e6e6e6" stroke-width="2.5" opacity="0.6"/><path d="M1778,640 L1848,800" stroke="#6e6e6e" stroke-width="1.2" opacity="0.7"/><path d="M1782,640 L1852,800" stroke="#e6e6e6" stroke-width="2.5" opacity="0.6"/><path d="M1789,640 L1859,800" stroke="#6e6e6e" stroke-width="1.2" opacity="0.7"/><path d="M1793,640 L1863,800" stroke="#e6e6e6" stroke-width="2.5" opacity="0.6"/><path d="M1800,640 L1870,800" stroke="#6e6e6e" stroke-width="1.2" opacity="0.7"/><path d="M1804,640 L1874,800" stroke="#e6e6e6" stroke-width="2.5" opacity="0.6"/><path d="M1811,640 L1881,800" stroke="#6e6e6e" stroke-width="1.2" opacity="0.7"/><path d="M1815,640 L1885,800" stroke="#e6e6e6" stroke-width="2.5" opacity="0.6"/><path d="M1822,640 L1892,800" stroke="#6e6e6e" stroke-width="1.2" opacity="0.7"/><path d="M1826,640 L1896,800" stroke="#e6e6e6" stroke-width="2.5" opacity="0.6"/><path d="M1833,640 L1903,800" stroke="#6e6e6e" stroke-width="1.2" opacity="0.7"/><path d="M1837,640 L1907,800" stroke="#e6e6e6" stroke-width="2.5" opacity="0.6"/><path d="M1844,640 L1914,800" stroke="#6e6e6e" stroke-width="1.2" opacity="0.7"/><path d="M1848,640 L1918,800" stroke="#e6e6e6" stroke-width="2.5" opacity="0.6"/><path d="M1855,640 L1925,800" stroke="#6e6e6e" stroke-width="1.2" opacity="0.7"/><path d="M1859,640 L1929,800" stroke="#e6e6e6" stroke-width="2.5" opacity="0.6"/><path d="M1866,640 L1936,800" stroke="#6e6e6e" stroke-width="1.2" opacity="0.7"/><path d="M1870,640 L1940,800" stroke="#e6e6e6" stroke-width="2.5" opacity="0.6"/><path d="M1877,640 L1947,800" stroke="#6e6e6e" stroke-width="1.2" opacity="0.7"/><path d="M1881,640 L1951,800" stroke="#e6e6e6" stroke-width="2.5" opacity="0.6"/><path d="M1888,640 L1958,800" stroke="#6e6e6e" stroke-width="1.2" opacity="0.7"/><path d="M1892,640 L1962,800" stroke="#e6e6e6" stroke-width="2.5" opacity="0.6"/><path d="M1899,640 L1969,800" stroke="#6e6e6e" stroke-width="1.2" opacity="0.7"/><path d="M1903,640 L1973,800" stroke="#e6e6e6" stroke-width="2.5" opacity="0.6"/><path d="M1680,730 L1900,630" stroke="#8a8a8a" stroke-width="1" opacity="0.5"/><path d="M1680,743 L1900,643" stroke="#8a8a8a" stroke-width="1" opacity="0.5"/><path d="M1680,756 L1900,656" stroke="#8a8a8a" stroke-width="1" opacity="0.5"/><path d="M1680,769 L1900,669" stroke="#8a8a8a" stroke-width="1" opacity="0.5"/><path d="M1680,782 L1900,682" stroke="#8a8a8a" stroke-width="1" opacity="0.5"/><path d="M1680,795 L1900,695" stroke="#8a8a8a" stroke-width="1" opacity="0.5"/><path d="M1680,808 L1900,708" stroke="#8a8a8a" stroke-width="1" opacity="0.5"/><path d="M1680,821 L1900,721" stroke="#8a8a8a" stroke-width="1" opacity="0.5"/></g>
<!-- central white ghost link -->
<linearGradient id="gGhost2" x1="0" y1="0" x2="0" y2="1"><stop offset="0" stop-color="#8c8c8c"/><stop offset="0.3" stop-color="#b4b4b4"/><stop offset="0.5" stop-color="#e6e6e6"/><stop offset="0.75" stop-color="#f4f4f4"/><stop offset="1" stop-color="#dcdcdc"/></linearGradient>
<pattern id="fine" width="4" height="4" patternUnits="userSpaceOnUse" patternTransform="rotate(70)"><rect width="4" height="4" fill="none"/><rect width="1.2" height="4" fill="#000" opacity="0.18"/></pattern>
<path d="M1547,705 L1562,684 L1598,691 L1635,696 L1700,705 L1698,740 L1690,780 C1680,805 1660,825 1640,838 L1628,846 L1600,852 L1575,850 L1560,842 C1552,820 1540,800 1520,785 L1500,748 L1530,745 Z" fill="url(#gGhost2)"/>
<path d="M1547,705 L1562,684 L1598,691 L1635,696 L1700,705 L1698,745 C1650,748 1600,752 1560,770 L1548,760 Z" fill="url(#fine)"/>
<path d="M1600,775 C1625,760 1660,752 1694,752 L1690,780 C1675,800 1650,815 1630,825 C1615,810 1605,792 1600,775 Z" fill="#f6f6f6" opacity="0.9"/>
<path d="M1698,739 C1693,775 1680,805 1652,826 L1626,846" fill="none" stroke="#5cd05c" stroke-width="20" stroke-linecap="round"/>
<!-- ===== green start state ===== -->
<path d="M1363,575 C1375,570 1390,585 1388,612 C1386,635 1375,645 1365,642 Z" fill="#c4d0c4" opacity="0.85"/>
<path d="M1322.6,568 C1326,558 1340,552 1364,550 L1370,553 L1393,562 L1399.8,566 L1384,580 L1368,578 L1367,610 L1365,641 L1372.5,673 L1340,675.5 L1329,670 L1327.8,634.6 L1322.6,613.6 Z" fill="url(#gG)"/>
<path d="M1364,643 L1409,647 L1414,658 L1370,664 Z" fill="#78e478"/>
<rect x="1380" y="646" width="20" height="16" rx="4" fill="#1f9f1f"/>
<path d="M1541,594 C1560,580 1592,576 1622,584 C1632,589 1638,596 1640,600 L1600,602 L1560,612 L1541,624 Z" fill="#6cda6c"/>
<path d="M1404,565 C1430,565 1460,578 1515,586 C1535,590 1549,595 1549,606 C1549,618 1541,624 1530,624 L1460,617 C1440,620 1420,630 1405,629 C1385,628 1379,612 1379,598 C1379,578 1390,565 1404,565 Z" fill="#1e921e"/>
<path d="M1414,576 C1440,578 1470,588 1515,592 C1527,594 1532,600 1532,606 C1532,613 1526,615 1518,615 L1460,611 C1440,613 1425,619 1414,619 C1402,619 1398,607 1398,597 C1398,585 1405,576 1414,576 Z" fill="#82ec82"/>
<ellipse cx="1674" cy="658" rx="10" ry="16" fill="#4cc84c"/>
<ellipse cx="1660" cy="706" rx="20" ry="8" fill="#2cb02c"/>
<!-- green behind shoulder -->
<path d="M1610,832 L1645,830 L1662,870 L1660,900 L1640,945 L1615,940 Z" fill="#62cc62"/>
<path d="M1543,856 C1552,872 1562,886 1576,897 L1580,890 C1568,880 1558,866 1550,852 Z" fill="#3cb83c"/>
<!-- ===== orange goal state ===== -->
<!-- link2 diagonal -->
<path d="M1468.8,757.5 L1467.3,772 L1489,801 L1518.4,835 L1533,852.4 L1547.6,854 L1571,848 L1576.8,835 L1582.6,822 L1579.7,810 L1562,788 L1533,769 L1496.5,745.8 Z" fill="url(#gO2)"/>
<!-- elbow lobe + upper tube -->
<path d="M1479,691 C1482,672 1492,660 1504,655 L1518,647.6 L1533,637.4 C1540,628 1556,623 1606,620 C1625,620 1640,621 1642.5,622.8 C1652,628 1657,634 1660,645 L1664.4,662.2 L1670,676.8 L1700,671 L1700,704.5 L1635,695.8 L1598.7,691.4 L1562,684 L1562,720 C1558,745 1545,760 1526,760 C1500,760 1482,735 1479,710 Z" fill="url(#gO)"/>
<path d="M1503,656 L1533,640 L1562,684 L1562,712 L1530,700 L1510,690 Z" fill="#7a7a7a" opacity="0.45"/>
<clipPath id="cpTube"><path d="M1479,691 C1482,672 1492,660 1504,655 L1518,647.6 L1533,637.4 C1540,628 1556,623 1606,620 C1625,620 1640,621 1642.5,622.8 C1652,628 1657,634 1660,645 L1664.4,662.2 L1670,676.8 L1700,671 L1700,704.5 L1635,695.8 L1598.7,691.4 L1562,684 L1562,720 C1558,745 1545,760 1526,760 C1500,760 1482,735 1479,710 Z"/></clipPath><g clip-path="url(#cpTube)"><rect x="1578.4" y="697.5" width="3.3" height="1.2" fill="#e58224" opacity="0.70"/><rect x="1608.4" y="644.2" width="2.3" height="1.3" fill="#e58224" opacity="0.82"/><rect x="1498.9" y="661.1" width="1.2" height="1.4" fill="#e58224" opacity="0.78"/><rect x="1487.3" y="757.5" width="3.4" height="1.3" fill="#e58224" opacity="0.75"/><rect x="1513.0" y="620.1" width="2.3" height="0.8" fill="#e58224" opacity="0.58"/><rect x="1531.7" y="622.3" width="2.2" height="1.2" fill="#e58224" opacity="0.84"/><rect x="1593.2" y="708.9" width="2.2" height="1.3" fill="#e58224" opacity="0.68"/><rect x="1539.8" y="759.7" width="3.5" height="1.5" fill="#e58224" opacity="0.78"/><rect x="1548.0" y="650.6" width="1.7" height="0.9" fill="#e58224" opacity="0.81"/><rect x="1566.9" y="738.2" width="2.0" height="1.6" fill="#e58224" opacity="0.84"/><rect x="1478.1" y="647.8" width="3.3" height="1.2" fill="#e58224" opacity="0.89"/><rect x="1566.2" y="628.4" width="2.6" height="1.4" fill="#e58224" opacity="0.61"/><rect x="1497.3" y="665.2" width="3.4" height="1.4" fill="#e58224" opacity="0.55"/><rect x="1532.7" y="632.3" width="1.1" height="1.4" fill="#e58224" opacity="0.57"/><rect x="1602.2" y="681.5" width="1.5" height="1.4" fill="#e58224" opacity="0.55"/><rect x="1620.9" y="634.5" width="2.1" height="1.0" fill="#e58224" opacity="0.61"/><rect x="1693.5" y="732.1" width="1.8" height="1.5" fill="#e58224" opacity="0.58"/><rect x="1565.5" y="739.3" width="2.6" height="0.9" fill="#e58224" opacity="0.90"/><rect x="1525.3" y="654.7" width="2.9" height="1.1" fill="#e58224" opacity="0.62"/><rect x="1494.3" y="630.8" width="2.5" height="1.0" fill="#e58224" opacity="0.74"/><rect x="1560.5" y="682.4" width="3.4" height="1.2" fill="#e58224" opacity="0.73"/><rect x="1670.4" y="644.0" width="1.4" height="1.5" fill="#e58224" opacity="0.83"/><rect x="1533.4" y="645.0" width="2.8" height="1.6" fill="#e58224" opacity="0.58"/><rect x="1688.9" y="743.3" width="2.5" height="1.1" fill="#e58224" opacity="0.54"/><rect x="1486.6" y="754.7" width="1.6" height="1.4" fill="#e58224" opacity="0.60"/><rect x="1660.9" y="702.7" width="1.7" height="0.9" fill="#e58224" opacity="0.79"/><rect x="1493.3" y="650.4" width="2.4" height="1.5" fill="#e58224" opacity="0.75"/><rect x="1540.2" y="748.3" width="1.5" height="0.8" fill="#e58224" opacity="0.61"/><rect x="1576.9" y="626.6" width="1.4" height="1.1" fill="#e58224" opacity="0.73"/><rect x="1507.2" y="669.4" width="3.2" height="1.6" fill="#e58224" opacity="0.76"/><rect x="1631.5" y="701.0" width="1.4" height="0.8" fill="#e58224" opacity="0.51"/><rect x="1680.1" y="717.5" width="3.4" height="0.8" fill="#e58224" opacity="0.75"/><rect x="1585.1" y="721.7" width="1.8" height="1.6" fill="#e58224" opacity="0.53"/><rect x="1599.2" y="722.7" width="3.3" height="1.4" fill="#e58224" opacity="0.78"/><rect x="1654.1" y="747.9" width="1.9" height="1.3" fill="#e58224" opacity="0.86"/><rect x="1671.4" y="677.2" width="3.0" height="1.5" fill="#e58224" opacity="0.73"/><rect x="1616.7" y="672.3" width="2.5" height="1.3" fill="#e58224" opacity="0.53"/><rect x="1619.9" y="759.1" width="3.2" height="1.4" fill="#e58224" opacity="0.66"/><rect x="1641.2" y="700.5" width="2.1" height="1.5" fill="#e58224" opacity="0.53"/><rect x="1644.5" y="622.2" width="2.5" height="1.2" fill="#e58224" opacity="0.59"/><rect x="1633.0" y="688.6" width="2.5" height="1.5" fill="#e58224" opacity="0.60"/><rect x="1480.5" y="660.7" width="2.7" height="1.0" fill="#e58224" opacity="0.57"/><rect x="1679.1" y="711.7" width="2.1" height="1.5" fill="#e58224" opacity="0.63"/><rect x="1625.8" y="646.2" width="2.1" height="1.4" fill="#e58224" opacity="0.87"/><rect x="1673.4" y="672.6" width="2.5" height="1.1" fill="#e58224" opacity="0.55"/><rect x="1588.2" y="736.9" width="3.1" height="1.4" fill="#e58224" opacity="0.88"/><rect x="1539.4" y="642.0" width="2.1" height="1.0" fill="#e58224" opacity="0.59"/><rect x="1569.9" y="706.9" width="2.2" height="1.1" fill="#e58224" opacity="0.84"/><rect x="1696.0" y="682.3" width="1.2" height="0.8" fill="#e58224" opacity="0.85"/><rect x="1487.2" y="718.6" width="2.4" height="1.0" fill="#e58224" opacity="0.82"/><rect x="1482.2" y="637.3" width="2.1" height="0.8" fill="#e58224" opacity="0.83"/><rect x="1530.7" y="638.0" width="1.1" height="1.3" fill="#e58224" opacity="0.68"/><rect x="1617.9" y="711.0" width="3.0" height="1.6" fill="#e58224" opacity="0.77"/><rect x="1522.3" y="685.5" width="1.4" height="0.8" fill="#e58224" opacity="0.69"/><rect x="1636.5" y="643.4" width="1.7" height="1.1" fill="#e58224" opacity="0.78"/><rect x="1593.5" y="705.3" width="2.9" height="1.1" fill="#e58224" opacity="0.82"/><rect x="1679.2" y="630.4" width="3.3" height="1.4" fill="#e58224" opacity="0.55"/><rect x="1578.7" y="706.8" width="3.3" height="1.1" fill="#e58224" opacity="0.73"/><rect x="1673.2" y="731.1" width="3.4" height="1.2" fill="#e58224" opacity="0.76"/><rect x="1523.5" y="720.5" width="3.0" height="1.3" fill="#e58224" opacity="0.79"/><rect x="1525.4" y="745.8" width="3.5" height="1.6" fill="#e58224" opacity="0.71"/><rect x="1653.6" y="663.5" width="3.3" height="1.5" fill="#e58224" opacity="0.64"/><rect x="1496.4" y="680.6" width="2.4" height="1.4" fill="#e58224" opacity="0.69"/><rect x="1484.3" y="732.9" width="1.2" height="1.4" fill="#e58224" opacity="0.57"/><rect x="1552.4" y="729.9" width="1.4" height="0.9" fill="#e58224" opacity="0.71"/><rect x="1638.6" y="737.3" width="2.7" height="1.6" fill="#e58224" opacity="0.70"/><rect x="1688.7" y="630.2" width="1.6" height="1.2" fill="#e58224" opacity="0.62"/><rect x="1639.8" y="708.7" width="2.3" height="1.5" fill="#e58224" opacity="0.72"/><rect x="1547.2" y="672.1" width="3.1" height="1.5" fill="#e58224" opacity="0.58"/><rect x="1666.9" y="755.5" width="2.3" height="1.3" fill="#e58224" opacity="0.58"/><rect x="1597.0" y="689.5" width="2.5" height="0.8" fill="#e58224" opacity="0.89"/><rect x="1592.6" y="674.9" width="3.0" height="1.3" fill="#e58224" opacity="0.70"/><rect x="1631.4" y="627.4" width="2.3" height="1.1" fill="#e58224" opacity="0.88"/><rect x="1683.0" y="656.2" width="2.2" height="0.9" fill="#e58224" opacity="0.67"/><rect x="1659.1" y="745.9" width="2.2" height="1.1" fill="#e58224" opacity="0.58"/><rect x="1615.2" y="749.4" width="1.3" height="1.4" fill="#e58224" opacity="0.51"/><rect x="1521.1" y="650.3" width="2.7" height="1.1" fill="#e58224" opacity="0.64"/><rect x="1615.6" y="632.9" width="2.8" height="0.9" fill="#e58224" opacity="0.70"/><rect x="1533.6" y="646.1" width="2.3" height="1.1" fill="#e58224" opacity="0.65"/><rect x="1569.8" y="693.2" width="1.4" height="1.0" fill="#e58224" opacity="0.75"/><rect x="1619.7" y="693.2" width="3.1" height="1.3" fill="#e58224" opacity="0.84"/><rect x="1529.7" y="723.2" width="3.0" height="1.5" fill="#e58224" opacity="0.63"/><rect x="1547.9" y="749.0" width="1.5" height="1.6" fill="#e58224" opacity="0.86"/><rect x="1507.7" y="652.0" width="2.8" height="1.0" fill="#e58224" opacity="0.54"/><rect x="1662.7" y="677.9" width="3.0" height="0.9" fill="#e58224" opacity="0.66"/><rect x="1630.1" y="620.5" width="1.5" height="1.3" fill="#e58224" opacity="0.86"/><rect x="1693.0" y="634.4" width="2.3" height="1.4" fill="#e58224" opacity="0.70"/><rect x="1630.2" y="644.8" width="1.2" height="0.9" fill="#e58224" opacity="0.51"/><rect x="1600.5" y="691.1" width="2.4" height="0.9" fill="#e58224" opacity="0.57"/><rect x="1523.3" y="737.3" width="3.5" height="1.5" fill="#e58224" opacity="0.54"/><rect x="1491.8" y="753.1" width="2.2" height="1.4" fill="#e58224" opacity="0.63"/><rect x="1581.7" y="691.2" width="2.1" height="1.3" fill="#e58224" opacity="0.51"/><rect x="1633.6" y="737.9" width="1.5" height="1.2" fill="#e58224" opacity="0.80"/><rect x="1568.0" y="645.7" width="1.4" height="1.2" fill="#e58224" opacity="0.51"/><rect x="1676.3" y="731.8" width="2.8" height="1.5" fill="#e58224" opacity="0.75"/><rect x="1567.8" y="703.1" width="2.3" height="1.6" fill="#e58224" opacity="0.82"/><rect x="1535.3" y="747.4" width="2.9" height="1.4" fill="#e58224" opacity="0.83"/><rect x="1568.1" y="745.3" width="3.2" height="1.4" fill="#e58224" opacity="0.81"/><rect x="1647.9" y="675.6" width="2.8" height="0.9" fill="#e58224" opacity="0.64"/><rect x="1582.1" y="619.5" width="1.9" height="1.3" fill="#e58224" opacity="0.75"/><rect x="1529.5" y="752.1" width="2.7" height="1.1" fill="#e58224" opacity="0.76"/><rect x="1604.4" y="693.7" width="2.0" height="1.6" fill="#e58224" opacity="0.76"/><rect x="1633.7" y="726.2" width="3.5" height="0.8" fill="#e58224" opacity="0.75"/><rect x="1642.0" y="654.4" width="2.0" height="0.8" fill="#e58224" opacity="0.58"/><rect x="1561.4" y="632.0" width="1.6" height="1.5" fill="#e58224" opacity="0.72"/><rect x="1590.7" y="755.3" width="2.4" height="1.6" fill="#e58224" opacity="0.76"/><rect x="1657.7" y="628.8" width="2.5" height="1.4" fill="#e58224" opacity="0.52"/><rect x="1684.5" y="640.7" width="2.2" height="0.9" fill="#e58224" opacity="0.70"/><rect x="1613.7" y="626.3" width="3.4" height="1.1" fill="#e58224" opacity="0.71"/><rect x="1610.7" y="669.9" width="1.7" height="1.3" fill="#e58224" opacity="0.72"/><rect x="1540.9" y="719.8" width="1.7" height="0.8" fill="#e58224" opacity="0.60"/><rect x="1487.5" y="640.2" width="2.9" height="1.1" fill="#e58224" opacity="0.86"/><rect x="1644.1" y="625.1" width="3.5" height="1.6" fill="#e58224" opacity="0.53"/><rect x="1679.0" y="679.0" width="2.2" height="1.6" fill="#e58224" opacity="0.60"/><rect x="1594.2" y="751.1" width="2.8" height="1.2" fill="#e58224" opacity="0.89"/><rect x="1659.3" y="703.7" width="1.3" height="1.3" fill="#e58224" opacity="0.68"/><rect x="1523.2" y="625.4" width="2.3" height="0.9" fill="#e58224" opacity="0.68"/><rect x="1626.3" y="682.7" width="1.7" height="1.3" fill="#e58224" opacity="0.67"/><rect x="1650.7" y="693.4" width="3.5" height="1.6" fill="#e58224" opacity="0.79"/><rect x="1530.9" y="634.2" width="3.2" height="1.4" fill="#e58224" opacity="0.75"/><rect x="1557.7" y="656.6" width="2.7" height="1.3" fill="#e58224" opacity="0.74"/><rect x="1618.5" y="725.0" width="1.5" height="1.0" fill="#e58224" opacity="0.89"/><rect x="1681.3" y="742.8" width="1.1" height="0.8" fill="#e58224" opacity="0.61"/><rect x="1572.4" y="706.5" width="1.3" height="1.2" fill="#e58224" opacity="0.53"/><rect x="1497.2" y="714.0" width="2.4" height="1.3" fill="#e58224" opacity="0.65"/><rect x="1584.2" y="647.9" width="1.9" height="1.4" fill="#e58224" opacity="0.84"/><rect x="1494.5" y="635.0" width="3.0" height="1.3" fill="#e58224" opacity="0.81"/><rect x="1525.3" y="678.3" width="1.6" height="1.4" fill="#e58224" opacity="0.65"/><rect x="1623.1" y="758.5" width="1.8" height="1.2" fill="#e58224" opacity="0.80"/><rect x="1682.4" y="678.7" width="1.9" height="0.9" fill="#e58224" opacity="0.85"/><rect x="1495.4" y="629.8" width="2.4" height="1.2" fill="#e58224" opacity="0.77"/><rect x="1544.3" y="728.1" width="1.2" height="1.0" fill="#e58224" opacity="0.76"/><rect x="1496.1" y="661.1" width="2.8" height="1.4" fill="#e58224" opacity="0.61"/><rect x="1509.7" y="668.8" width="2.8" height="1.1" fill="#e58224" opacity="0.55"/><rect x="1635.5" y="698.8" width="3.3" height="1.6" fill="#e58224" opacity="0.87"/><rect x="1575.2" y="732.0" width="1.8" height="1.1" fill="#e58224" opacity="0.66"/><rect x="1685.5" y="745.1" width="1.6" height="1.1" fill="#e58224" opacity="0.65"/><rect x="1558.7" y="674.2" width="2.0" height="1.0" fill="#e58224" opacity="0.73"/><rect x="1655.0" y="694.8" width="3.1" height="1.3" fill="#e58224" opacity="0.57"/><rect x="1646.5" y="743.1" width="1.7" height="0.8" fill="#e58224" opacity="0.71"/><rect x="1598.8" y="698.6" width="3.4" height="1.3" fill="#e58224" opacity="0.82"/><rect x="1492.2" y="695.6" width="3.0" height="0.9" fill="#e58224" opacity="0.53"/><rect x="1641.6" y="745.7" width="1.2" height="1.3" fill="#e58224" opacity="0.56"/><rect x="1643.6" y="710.2" width="1.6" height="1.0" fill="#e58224" opacity="0.81"/><rect x="1593.8" y="726.6" width="2.0" height="1.1" fill="#e58224" opacity="0.89"/><rect x="1627.3" y="688.1" width="2.3" height="1.4" fill="#e58224" opacity="0.78"/><rect x="1681.1" y="676.3" width="3.1" height="1.3" fill="#e58224" opacity="0.84"/><rect x="1656.9" y="736.4" width="3.2" height="1.6" fill="#e58224" opacity="0.76"/><rect x="1594.3" y="718.8" width="3.0" height="1.1" fill="#e58224" opacity="0.67"/><rect x="1510.5" y="723.3" width="3.5" height="1.1" fill="#e58224" opacity="0.57"/><rect x="1523.4" y="678.3" width="1.7" height="1.6" fill="#e58224" opacity="0.52"/><rect x="1546.5" y="634.3" width="2.6" height="1.4" fill="#e58224" opacity="0.57"/><rect x="1491.8" y="683.1" width="2.5" height="1.5" fill="#e58224" opacity="0.51"/><rect x="1502.1" y="644.2" width="1.5" height="1.0" fill="#e58224" opacity="0.79"/><rect x="1610.0" y="649.8" width="1.5" height="1.0" fill="#e58224" opacity="0.57"/><rect x="1646.2" y="662.3" width="2.4" height="1.5" fill="#e58224" opacity="0.69"/><rect x="1535.8" y="744.0" width="3.3" height="1.1" fill="#e58224" opacity="0.72"/><rect x="1690.5" y="686.5" width="1.6" height="0.8" fill="#e58224" opacity="0.88"/><rect x="1655.9" y="672.7" width="2.3" height="1.2" fill="#e58224" opacity="0.61"/><rect x="1697.8" y="711.4" width="1.6" height="0.8" fill="#e58224" opacity="0.69"/><rect x="1560.5" y="731.1" width="2.8" height="1.3" fill="#e58224" opacity="0.56"/><rect x="1512.8" y="663.7" width="1.6" height="1.5" fill="#e58224" opacity="0.71"/><rect x="1619.4" y="759.0" width="1.7" height="1.2" fill="#e58224" opacity="0.56"/><rect x="1649.0" y="618.2" width="3.1" height="1.5" fill="#e58224" opacity="0.83"/><rect x="1496.3" y="656.3" width="2.8" height="0.9" fill="#e58224" opacity="0.69"/><rect x="1582.0" y="753.7" width="2.5" height="1.5" fill="#e58224" opacity="0.62"/><rect x="1653.2" y="677.2" width="3.3" height="0.9" fill="#e58224" opacity="0.83"/><rect x="1524.3" y="695.2" width="2.3" height="0.9" fill="#e58224" opacity="0.83"/><rect x="1547.1" y="662.1" width="1.2" height="1.0" fill="#e58224" opacity="0.69"/><rect x="1636.8" y="669.1" width="2.7" height="0.9" fill="#e58224" opacity="0.66"/><rect x="1580.5" y="755.3" width="3.1" height="1.3" fill="#e58224" opacity="0.50"/><rect x="1561.7" y="718.8" width="1.6" height="1.3" fill="#e58224" opacity="0.68"/><rect x="1480.3" y="758.8" width="3.0" height="1.0" fill="#e58224" opacity="0.75"/><rect x="1542.5" y="671.4" width="2.3" height="1.0" fill="#e58224" opacity="0.63"/><rect x="1565.1" y="712.7" width="1.6" height="1.0" fill="#e58224" opacity="0.79"/><rect x="1551.1" y="752.2" width="2.4" height="1.4" fill="#e58224" opacity="0.63"/><rect x="1661.6" y="631.1" width="1.4" height="0.9" fill="#e58224" opacity="0.77"/><rect x="1635.2" y="643.5" width="2.0" height="1.5" fill="#e58224" opacity="0.74"/><rect x="1498.0" y="650.2" width="1.4" height="0.9" fill="#e58224" opacity="0.66"/><rect x="1494.1" y="748.7" width="2.1" height="1.2" fill="#e58224" opacity="0.76"/><rect x="1648.2" y="734.6" width="2.0" height="1.1" fill="#e58224" opacity="0.66"/><rect x="1481.4" y="674.9" width="2.7" height="1.6" fill="#e58224" opacity="0.82"/><rect x="1624.6" y="704.4" width="1.0" height="1.1" fill="#e58224" opacity="0.64"/><rect x="1622.5" y="633.1" width="1.9" height="1.2" fill="#e58224" opacity="0.82"/><rect x="1661.2" y="704.8" width="1.4" height="1.4" fill="#e58224" opacity="0.86"/><rect x="1599.7" y="668.1" width="2.3" height="0.9" fill="#e58224" opacity="0.79"/><rect x="1697.1" y="691.3" width="2.8" height="1.5" fill="#e58224" opacity="0.58"/><rect x="1687.8" y="707.1" width="1.5" height="0.9" fill="#e58224" opacity="0.60"/><rect x="1606.0" y="717.0" width="1.8" height="1.5" fill="#e58224" opacity="0.64"/><rect x="1580.8" y="635.6" width="3.4" height="0.9" fill="#e58224" opacity="0.86"/><rect x="1598.6" y="697.6" width="2.4" height="1.0" fill="#e58224" opacity="0.86"/><rect x="1698.3" y="734.1" width="2.5" height="0.9" fill="#e58224" opacity="0.83"/><rect x="1542.1" y="745.4" width="1.6" height="1.3" fill="#e58224" opacity="0.83"/><rect x="1519.2" y="695.8" width="1.2" height="0.8" fill="#e58224" opacity="0.57"/><rect x="1697.1" y="751.4" width="2.6" height="1.0" fill="#e58224" opacity="0.77"/><rect x="1641.8" y="672.2" width="2.5" height="1.4" fill="#e58224" opacity="0.51"/><rect x="1522.3" y="684.5" width="1.4" height="1.1" fill="#e58224" opacity="0.73"/><rect x="1516.6" y="691.8" width="1.7" height="1.3" fill="#e58224" opacity="0.63"/><rect x="1620.5" y="623.4" width="2.7" height="0.9" fill="#e58224" opacity="0.88"/><rect x="1611.2" y="684.7" width="2.0" height="1.3" fill="#e58224" opacity="0.78"/><rect x="1646.3" y="724.7" width="2.2" height="1.6" fill="#e58224" opacity="0.84"/><rect x="1667.8" y="676.1" width="2.1" height="1.3" fill="#e58224" opacity="0.86"/><rect x="1594.8" y="692.6" width="2.1" height="1.5" fill="#e58224" opacity="0.63"/><rect x="1490.1" y="721.0" width="3.3" height="1.4" fill="#e58224" opacity="0.74"/><rect x="1644.9" y="661.3" width="2.5" height="0.9" fill="#e58224" opacity="0.55"/><rect x="1577.2" y="689.4" width="2.0" height="0.8" fill="#e58224" opacity="0.78"/><rect x="1594.8" y="652.0" width="1.8" height="1.1" fill="#e58224" opacity="0.59"/><rect x="1493.2" y="747.4" width="3.4" height="1.3" fill="#e58224" opacity="0.85"/><rect x="1571.6" y="732.3" width="1.6" height="1.4" fill="#e58224" opacity="0.73"/><rect x="1678.6" y="632.0" width="3.0" height="0.9" fill="#e58224" opacity="0.72"/><rect x="1689.1" y="618.1" width="1.6" height="1.0" fill="#e58224" opacity="0.63"/><rect x="1491.9" y="745.1" width="3.0" height="1.1" fill="#e58224" opacity="0.64"/><rect x="1608.0" y="624.5" width="1.1" height="1.5" fill="#e58224" opacity="0.62"/><rect x="1588.6" y="750.6" width="3.4" height="1.2" fill="#e58224" opacity="0.58"/><rect x="1543.6" y="749.0" width="3.2" height="1.0" fill="#e58224" opacity="0.84"/><rect x="1556.6" y="685.1" width="1.4" height="1.5" fill="#e58224" opacity="0.90"/><rect x="1522.8" y="707.8" width="1.5" height="1.5" fill="#e58224" opacity="0.52"/><rect x="1501.6" y="721.1" width="1.8" height="1.5" fill="#e58224" opacity="0.85"/><rect x="1636.3" y="637.2" width="2.7" height="1.6" fill="#e58224" opacity="0.68"/><rect x="1495.5" y="649.7" width="1.8" height="1.4" fill="#e58224" opacity="0.58"/></g>
<circle cx="1527" cy="728" r="35" fill="#ad661e"/>
<circle cx="1529" cy="732" r="23" fill="#f4bc84"/>
<!-- link4 band -->
<path d="M1680,664 L1728,664 L1740,680 L1779,708 L1760,715 L1700,705 L1680,702 Z" fill="#eaa86c"/>
<!-- elbow link5 -->
<path d="M1736,650 C1745,630 1768,606 1792,600 C1812,595 1826,598 1834,610 C1845,630 1852,650 1858,671 L1856,694 L1826,717 L1812,714 L1779,708 L1760,714 L1728,700 Z" fill="#efb070"/>
<path d="M1736,650 L1752,626 L1770,621 L1812,621 L1820,647 L1813,660 L1802,670 L1784,682 L1776,695 L1760,692 L1744,689 L1733,674 Z" fill="#b56a22"/>
<ellipse cx="1789" cy="637.5" rx="24" ry="14.5" fill="#f4b880"/>
<path d="M1806,676 C1820,668 1840,662 1856,660" fill="none" stroke="#c88a4a" stroke-width="1"/>
<path d="M1812,712 C1828,705 1845,698 1856,690" fill="none" stroke="#c07a38" stroke-width="2"/>
<path d="M1791,689 L1805,684 L1814,725 L1795,728 Z" fill="#c07628"/>
<!-- shoulder link (goal, speckled) -->
<path d="M1604.5,848.6 L1594.5,857.3 L1587,873.4 L1582,892 L1577,904.5 L1566,938 L1566,990 L1631.8,990 L1631.8,929 C1636,915 1650,900 1655,880 C1650,860 1630,845 1604.5,848.6 Z" fill="url(#gL2)"/>
<path d="M1566,850 C1575,840 1595,836 1615,842 L1604,848 L1588,872 L1578,898 L1570,895 C1566,880 1564,862 1566,850 Z" fill="#e2a46a"/>
<path d="M1566,938 L1566,990 C1580,997 1615,997 1631.8,990 L1631.8,929 C1615,935 1590,940 1566,938 Z" fill="url(#gL1)"/>
<ellipse cx="1632" cy="887" rx="27" ry="30" fill="url(#gSh)"/>
<clipPath id="cpL1"><path d="M1604.5,848.6 L1594.5,857.3 L1587,873.4 L1582,892 L1577,904.5 L1566,938 L1566,990 L1631.8,990 L1631.8,929 C1636,915 1650,900 1655,880 C1650,860 1630,845 1604.5,848.6 Z"/></clipPath><g clip-path="url(#cpL1)"><rect x="1593.7" y="867.2" width="0.9" height="3.1" fill="#f09040" opacity="0.8"/><rect x="1616.0" y="853.7" width="2.1" height="3.4" fill="#e07a20" opacity="0.8"/><rect x="1657.7" y="851.8" width="1.2" height="1.9" fill="#e8892a" opacity="0.8"/><rect x="1617.9" y="927.4" width="0.9" height="3.2" fill="#e8892a" opacity="0.8"/><rect x="1567.8" y="875.3" width="1.4" height="2.4" fill="#e07a20" opacity="0.8"/><rect x="1612.2" y="869.2" width="2.1" height="2.8" fill="#e07a20" opacity="0.8"/><rect x="1569.6" y="927.0" width="1.9" height="2.5" fill="#f09040" opacity="0.8"/><rect x="1620.2" y="930.2" width="2.0" height="4.3" fill="#f09040" opacity="0.8"/><rect x="1630.3" y="854.6" width="1.2" height="3.2" fill="#e07a20" opacity="0.8"/><rect x="1642.5" y="886.8" width="1.7" height="1.6" fill="#f09040" opacity="0.8"/><rect x="1596.8" y="934.8" width="1.1" height="2.4" fill="#e07a20" opacity="0.8"/><rect x="1586.3" y="902.5" width="0.9" height="2.8" fill="#e07a20" opacity="0.8"/><rect x="1589.2" y="865.1" width="1.6" height="3.6" fill="#f09040" opacity="0.8"/><rect x="1570.1" y="867.2" width="0.8" height="4.0" fill="#e8892a" opacity="0.8"/><rect x="1587.7" y="845.6" width="1.3" height="3.2" fill="#e8892a" opacity="0.8"/><rect x="1629.7" y="920.8" width="1.7" height="1.7" fill="#e07a20" opacity="0.8"/><rect x="1640.2" y="902.7" width="0.9" height="3.4" fill="#e8892a" opacity="0.8"/><rect x="1617.5" y="923.9" width="1.7" height="1.7" fill="#e8892a" opacity="0.8"/><rect x="1622.2" y="866.8" width="1.3" height="2.6" fill="#e8892a" opacity="0.8"/><rect x="1573.3" y="916.7" width="1.5" height="2.4" fill="#e8892a" opacity="0.8"/><rect x="1572.0" y="895.4" width="2.0" height="2.0" fill="#e8892a" opacity="0.8"/><rect x="1629.6" y="979.4" width="1.2" height="3.4" fill="#e8892a" opacity="0.8"/><rect x="1630.2" y="883.4" width="1.0" height="3.8" fill="#e07a20" opacity="0.8"/><rect x="1615.1" y="918.9" width="1.7" height="3.9" fill="#e8892a" opacity="0.8"/><rect x="1641.0" y="965.3" width="1.1" height="3.1" fill="#f09040" opacity="0.8"/><rect x="1633.6" y="990.5" width="1.5" height="2.1" fill="#e07a20" opacity="0.8"/><rect x="1655.7" y="910.7" width="2.2" height="4.4" fill="#f09040" opacity="0.8"/><rect x="1569.9" y="860.0" width="1.3" height="2.9" fill="#e07a20" opacity="0.8"/><rect x="1644.4" y="915.5" width="1.9" height="1.8" fill="#e07a20" opacity="0.8"/><rect x="1573.8" y="902.1" width="1.1" height="4.2" fill="#f09040" opacity="0.8"/><rect x="1639.3" y="893.9" width="2.2" height="2.7" fill="#f09040" opacity="0.8"/><rect x="1634.8" y="857.5" width="2.2" height="1.6" fill="#e07a20" opacity="0.8"/><rect x="1586.7" y="888.1" width="1.6" height="2.3" fill="#f09040" opacity="0.8"/><rect x="1643.8" y="854.0" width="2.1" height="3.5" fill="#e07a20" opacity="0.8"/><rect x="1640.3" y="870.3" width="1.8" height="3.2" fill="#f09040" opacity="0.8"/><rect x="1628.9" y="923.0" width="1.9" height="4.1" fill="#e8892a" opacity="0.8"/><rect x="1586.4" y="885.7" width="1.5" height="3.2" fill="#e8892a" opacity="0.8"/><rect x="1605.4" y="935.0" width="1.5" height="3.6" fill="#f09040" opacity="0.8"/><rect x="1586.3" y="921.9" width="2.1" height="4.3" fill="#e8892a" opacity="0.8"/><rect x="1644.3" y="865.2" width="1.4" height="1.7" fill="#e8892a" opacity="0.8"/><rect x="1604.0" y="876.3" width="1.0" height="3.8" fill="#e07a20" opacity="0.8"/><rect x="1575.5" y="913.8" width="0.9" height="4.2" fill="#e8892a" opacity="0.8"/><rect x="1581.2" y="891.8" width="0.8" height="3.2" fill="#f09040" opacity="0.8"/><rect x="1630.9" y="901.5" width="1.2" height="4.4" fill="#e8892a" opacity="0.8"/><rect x="1658.5" y="960.9" width="0.9" height="2.3" fill="#e8892a" opacity="0.8"/><rect x="1650.8" y="871.7" width="1.9" height="4.0" fill="#e07a20" opacity="0.8"/><rect x="1652.1" y="928.9" width="0.9" height="1.7" fill="#e07a20" opacity="0.8"/><rect x="1563.6" y="858.0" width="1.7" height="2.2" fill="#f09040" opacity="0.8"/><rect x="1646.6" y="911.7" width="1.6" height="4.3" fill="#f09040" opacity="0.8"/><rect x="1622.9" y="851.4" width="2.1" height="4.4" fill="#f09040" opacity="0.8"/><rect x="1566.9" y="874.7" width="1.2" height="3.8" fill="#f09040" opacity="0.8"/><rect x="1563.8" y="919.3" width="1.5" height="2.2" fill="#f09040" opacity="0.8"/><rect x="1611.7" y="946.1" width="1.3" height="4.0" fill="#e07a20" opacity="0.8"/><rect x="1633.4" y="865.5" width="2.2" height="4.0" fill="#e8892a" opacity="0.8"/><rect x="1578.0" y="857.4" width="2.0" height="3.5" fill="#f09040" opacity="0.8"/><rect x="1597.7" y="893.4" width="1.3" height="1.6" fill="#f09040" opacity="0.8"/><rect x="1583.4" y="871.9" width="0.9" height="2.3" fill="#e07a20" opacity="0.8"/><rect x="1587.9" y="858.2" width="0.9" height="1.6" fill="#f09040" opacity="0.8"/><rect x="1623.7" y="857.4" width="2.0" height="2.0" fill="#e07a20" opacity="0.8"/><rect x="1638.8" y="932.7" width="1.8" height="3.0" fill="#f09040" opacity="0.8"/><rect x="1613.3" y="919.1" width="1.9" height="4.0" fill="#e07a20" opacity="0.8"/><rect x="1640.2" y="949.5" width="1.7" height="1.8" fill="#e8892a" opacity="0.8"/><rect x="1643.9" y="927.1" width="1.7" height="3.5" fill="#f09040" opacity="0.8"/><rect x="1636.1" y="878.9" width="1.4" height="4.0" fill="#e8892a" opacity="0.8"/><rect x="1608.9" y="945.5" width="1.7" height="3.4" fill="#e8892a" opacity="0.8"/><rect x="1620.8" y="893.8" width="1.8" height="3.4" fill="#e8892a" opacity="0.8"/><rect x="1563.2" y="853.9" width="1.7" height="3.6" fill="#e07a20" opacity="0.8"/><rect x="1607.7" y="957.8" width="1.6" height="2.4" fill="#e8892a" opacity="0.8"/><rect x="1653.8" y="847.6" width="1.9" height="4.4" fill="#f09040" opacity="0.8"/><rect x="1659.4" y="901.9" width="2.1" height="1.7" fill="#e8892a" opacity="0.8"/><rect x="1575.9" y="922.0" width="1.0" height="4.0" fill="#e07a20" opacity="0.8"/><rect x="1589.4" y="861.6" width="1.5" height="4.1" fill="#f09040" opacity="0.8"/><rect x="1564.4" y="845.5" width="1.4" height="2.4" fill="#e8892a" opacity="0.8"/><rect x="1594.5" y="892.7" width="1.4" height="4.3" fill="#e8892a" opacity="0.8"/><rect x="1598.5" y="902.8" width="1.6" height="2.6" fill="#f09040" opacity="0.8"/><rect x="1567.1" y="942.3" width="1.0" height="4.4" fill="#f09040" opacity="0.8"/><rect x="1612.1" y="872.9" width="2.1" height="4.2" fill="#e07a20" opacity="0.8"/><rect x="1581.9" y="856.8" width="1.4" height="3.3" fill="#e8892a" opacity="0.8"/><rect x="1652.8" y="863.7" width="1.3" height="2.4" fill="#e07a20" opacity="0.8"/><rect x="1585.4" y="916.0" width="1.0" height="3.4" fill="#e8892a" opacity="0.8"/><rect x="1583.6" y="978.2" width="1.4" height="1.9" fill="#e8892a" opacity="0.8"/><rect x="1585.9" y="870.7" width="1.2" height="2.6" fill="#e07a20" opacity="0.8"/><rect x="1581.8" y="848.0" width="1.3" height="3.7" fill="#e8892a" opacity="0.8"/><rect x="1611.3" y="937.6" width="1.1" height="2.3" fill="#e8892a" opacity="0.8"/><rect x="1592.6" y="964.7" width="1.0" height="2.8" fill="#f09040" opacity="0.8"/><rect x="1607.9" y="911.0" width="1.1" height="2.0" fill="#e07a20" opacity="0.8"/><rect x="1572.7" y="966.3" width="2.0" height="4.2" fill="#e8892a" opacity="0.8"/><rect x="1616.0" y="850.8" width="1.1" height="4.3" fill="#e07a20" opacity="0.8"/><rect x="1613.8" y="909.3" width="0.9" height="2.4" fill="#e07a20" opacity="0.8"/><rect x="1580.8" y="883.3" width="0.8" height="3.1" fill="#f09040" opacity="0.8"/><rect x="1589.3" y="891.5" width="1.1" height="3.1" fill="#e07a20" opacity="0.8"/><rect x="1592.1" y="848.2" width="1.7" height="2.8" fill="#f09040" opacity="0.8"/><rect x="1584.3" y="907.4" width="1.5" height="3.6" fill="#e07a20" opacity="0.8"/><rect x="1642.4" y="878.9" width="1.9" height="2.4" fill="#e07a20" opacity="0.8"/><rect x="1610.6" y="872.5" width="1.4" height="3.5" fill="#e07a20" opacity="0.8"/><rect x="1567.9" y="902.8" width="2.0" height="3.7" fill="#e8892a" opacity="0.8"/><rect x="1627.1" y="900.7" width="1.3" height="2.0" fill="#e8892a" opacity="0.8"/><rect x="1569.7" y="856.9" width="2.0" height="3.2" fill="#e8892a" opacity="0.8"/><rect x="1640.8" y="857.9" width="1.1" height="3.1" fill="#f09040" opacity="0.8"/><rect x="1580.9" y="898.5" width="0.8" height="2.7" fill="#e07a20" opacity="0.8"/><rect x="1637.1" y="851.0" width="0.9" height="4.3" fill="#f09040" opacity="0.8"/><rect x="1581.1" y="854.2" width="1.3" height="2.5" fill="#e07a20" opacity="0.8"/><rect x="1566.3" y="954.7" width="2.1" height="2.4" fill="#e07a20" opacity="0.8"/><rect x="1654.4" y="848.6" width="1.5" height="4.4" fill="#f09040" opacity="0.8"/><rect x="1639.4" y="979.3" width="1.0" height="3.0" fill="#e8892a" opacity="0.8"/><rect x="1640.7" y="953.6" width="1.9" height="3.3" fill="#f09040" opacity="0.8"/><rect x="1646.4" y="912.7" width="1.6" height="3.0" fill="#f09040" opacity="0.8"/><rect x="1658.1" y="974.9" width="1.2" height="1.8" fill="#e8892a" opacity="0.8"/><rect x="1603.3" y="990.3" width="1.0" height="1.9" fill="#f09040" opacity="0.8"/><rect x="1622.8" y="944.1" width="2.0" height="3.5" fill="#e8892a" opacity="0.8"/><rect x="1638.4" y="888.2" width="1.2" height="2.3" fill="#f09040" opacity="0.8"/><rect x="1581.5" y="881.4" width="1.0" height="4.2" fill="#e07a20" opacity="0.8"/><rect x="1580.4" y="854.5" width="1.1" height="3.1" fill="#e07a20" opacity="0.8"/><rect x="1641.2" y="941.0" width="0.9" height="2.9" fill="#e8892a" opacity="0.8"/><rect x="1590.8" y="862.5" width="2.2" height="3.2" fill="#e8892a" opacity="0.8"/><rect x="1587.5" y="959.3" width="0.9" height="3.3" fill="#e07a20" opacity="0.8"/><rect x="1596.3" y="850.5" width="0.9" height="4.5" fill="#e8892a" opacity="0.8"/><rect x="1563.1" y="893.1" width="1.1" height="2.4" fill="#e8892a" opacity="0.8"/><rect x="1565.1" y="917.9" width="1.4" height="3.9" fill="#e07a20" opacity="0.8"/><rect x="1589.8" y="890.2" width="1.2" height="3.2" fill="#f09040" opacity="0.8"/><rect x="1602.6" y="847.7" width="1.9" height="3.4" fill="#f09040" opacity="0.8"/><rect x="1650.4" y="907.3" width="1.4" height="4.1" fill="#f09040" opacity="0.8"/><rect x="1618.1" y="981.3" width="1.0" height="2.5" fill="#e8892a" opacity="0.8"/><rect x="1610.1" y="963.3" width="1.1" height="1.9" fill="#e8892a" opacity="0.8"/><rect x="1652.8" y="902.0" width="1.7" height="4.0" fill="#e8892a" opacity="0.8"/><rect x="1622.2" y="873.8" width="1.6" height="1.6" fill="#e07a20" opacity="0.8"/><rect x="1648.6" y="968.8" width="1.7" height="2.5" fill="#f09040" opacity="0.8"/><rect x="1620.8" y="925.9" width="1.2" height="2.8" fill="#e07a20" opacity="0.8"/><rect x="1586.4" y="902.2" width="1.5" height="2.0" fill="#e8892a" opacity="0.8"/><rect x="1624.4" y="857.1" width="1.9" height="3.0" fill="#e8892a" opacity="0.8"/><rect x="1638.9" y="848.8" width="1.7" height="3.6" fill="#e8892a" opacity="0.8"/><rect x="1649.9" y="885.4" width="1.0" height="3.0" fill="#f09040" opacity="0.8"/><rect x="1582.4" y="883.6" width="1.2" height="1.6" fill="#e8892a" opacity="0.8"/><rect x="1594.1" y="900.4" width="1.2" height="3.8" fill="#e8892a" opacity="0.8"/><rect x="1624.4" y="897.9" width="1.6" height="3.2" fill="#e8892a" opacity="0.8"/><rect x="1586.7" y="923.7" width="1.8" height="2.6" fill="#f09040" opacity="0.8"/><rect x="1634.9" y="852.1" width="1.2" height="3.4" fill="#e07a20" opacity="0.8"/><rect x="1653.0" y="976.7" width="1.8" height="2.2" fill="#f09040" opacity="0.8"/><rect x="1622.4" y="908.5" width="2.1" height="1.9" fill="#e8892a" opacity="0.8"/><rect x="1622.0" y="851.7" width="1.6" height="2.4" fill="#e07a20" opacity="0.8"/><rect x="1597.0" y="878.0" width="1.6" height="2.1" fill="#e07a20" opacity="0.8"/><rect x="1568.2" y="866.3" width="1.2" height="3.9" fill="#e8892a" opacity="0.8"/><rect x="1567.5" y="965.7" width="1.6" height="3.2" fill="#e07a20" opacity="0.8"/><rect x="1650.5" y="851.5" width="1.4" height="2.2" fill="#e8892a" opacity="0.8"/><rect x="1651.4" y="860.4" width="1.7" height="2.1" fill="#f09040" opacity="0.8"/><rect x="1581.6" y="934.4" width="1.7" height="3.9" fill="#e8892a" opacity="0.8"/><rect x="1611.8" y="854.4" width="2.2" height="3.7" fill="#f09040" opacity="0.8"/><rect x="1632.1" y="845.9" width="1.8" height="2.9" fill="#e07a20" opacity="0.8"/><rect x="1626.2" y="870.8" width="1.2" height="3.4" fill="#e8892a" opacity="0.8"/><rect x="1594.9" y="955.2" width="2.0" height="3.6" fill="#f09040" opacity="0.8"/><rect x="1624.3" y="944.8" width="2.1" height="4.4" fill="#f09040" opacity="0.8"/><rect x="1648.2" y="847.2" width="1.1" height="3.7" fill="#e8892a" opacity="0.8"/><rect x="1635.1" y="893.1" width="1.3" height="2.2" fill="#e07a20" opacity="0.8"/><rect x="1652.3" y="989.3" width="1.6" height="2.9" fill="#e07a20" opacity="0.8"/><rect x="1575.9" y="849.2" width="1.8" height="3.4" fill="#e07a20" opacity="0.8"/><rect x="1568.6" y="851.9" width="1.9" height="2.1" fill="#e07a20" opacity="0.8"/><rect x="1654.6" y="905.9" width="1" height="5.5" fill="#5ccc5c" opacity="0.7"/><rect x="1655.7" y="985.0" width="1" height="2.4" fill="#5ccc5c" opacity="0.7"/><rect x="1620.3" y="910.1" width="1" height="2.1" fill="#5ccc5c" opacity="0.7"/><rect x="1652.4" y="973.1" width="1" height="4.5" fill="#5ccc5c" opacity="0.7"/><rect x="1651.3" y="956.8" width="1" height="3.1" fill="#5ccc5c" opacity="0.7"/><rect x="1615.0" y="908.8" width="1" height="5.0" fill="#5ccc5c" opacity="0.7"/><rect x="1620.2" y="928.7" width="1" height="3.7" fill="#5ccc5c" opacity="0.7"/><rect x="1611.0" y="923.1" width="1" height="3.1" fill="#5ccc5c" opacity="0.7"/><rect x="1645.8" y="933.1" width="1" height="3.3" fill="#5ccc5c" opacity="0.7"/><rect x="1658.2" y="945.3" width="1" height="5.4" fill="#5ccc5c" opacity="0.7"/><rect x="1640.9" y="902.8" width="1" height="3.7" fill="#5ccc5c" opacity="0.7"/><rect x="1631.8" y="969.6" width="1" height="3.4" fill="#5ccc5c" opacity="0.7"/><rect x="1645.2" y="948.4" width="1" height="2.9" fill="#5ccc5c" opacity="0.7"/><rect x="1653.1" y="908.2" width="1" height="5.3" fill="#5ccc5c" opacity="0.7"/><rect x="1618.5" y="900.1" width="1" height="2.8" fill="#5ccc5c" opacity="0.7"/><rect x="1648.1" y="988.0" width="1" height="2.0" fill="#5ccc5c" opacity="0.7"/><rect x="1634.5" y="944.2" width="1" height="5.2" fill="#5ccc5c" opacity="0.7"/><rect x="1619.2" y="944.5" width="1" height="3.4" fill="#5ccc5c" opacity="0.7"/><rect x="1651.6" y="923.5" width="1" height="5.8" fill="#5ccc5c" opacity="0.7"/><rect x="1624.2" y="919.3" width="1" height="4.8" fill="#5ccc5c" opacity="0.7"/><rect x="1634.9" y="909.9" width="1" height="4.5" fill="#5ccc5c" opacity="0.7"/><rect x="1614.0" y="970.9" width="1" height="4.8" fill="#5ccc5c" opacity="0.7"/><rect x="1649.3" y="956.5" width="1" height="3.4" fill="#5ccc5c" opacity="0.7"/><rect x="1630.1" y="935.5" width="1" height="5.6" fill="#5ccc5c" opacity="0.7"/><rect x="1614.3" y="980.0" width="1" height="2.1" fill="#5ccc5c" opacity="0.7"/><rect x="1620.3" y="923.7" width="1" height="5.6" fill="#5ccc5c" opacity="0.7"/><rect x="1635.1" y="934.1" width="1" height="5.5" fill="#5ccc5c" opacity="0.7"/><rect x="1621.7" y="941.5" width="1" height="4.1" fill="#5ccc5c" opacity="0.7"/><rect x="1647.7" y="967.8" width="1" height="4.6" fill="#5ccc5c" opacity="0.7"/><rect x="1627.4" y="929.4" width="1" height="2.6" fill="#5ccc5c" opacity="0.7"/><rect x="1652.2" y="959.6" width="1" height="5.0" fill="#5ccc5c" opacity="0.7"/><rect x="1618.5" y="939.5" width="1" height="5.1" fill="#5ccc5c" opacity="0.7"/><rect x="1639.0" y="911.3" width="1" height="3.8" fill="#5ccc5c" opacity="0.7"/><rect x="1654.3" y="921.4" width="1" height="2.8" fill="#5ccc5c" opacity="0.7"/><rect x="1625.1" y="963.3" width="1" height="5.4" fill="#5ccc5c" opacity="0.7"/><rect x="1617.7" y="914.0" width="1" height="3.0" fill="#5ccc5c" opacity="0.7"/><rect x="1626.3" y="947.0" width="1" height="2.6" fill="#5ccc5c" opacity="0.7"/><rect x="1626.4" y="917.0" width="1" height="5.9" fill="#5ccc5c" opacity="0.7"/><rect x="1646.4" y="909.2" width="1" height="5.8" fill="#5ccc5c" opacity="0.7"/><rect x="1615.1" y="934.6" width="1" height="5.9" fill="#5ccc5c" opacity="0.7"/></g>
<!-- base -->
<path d="M1566,990 L1563.7,1000 C1562,1007 1559,1012 1554,1016 L1551.7,1018.5 L1551.7,1063 L1541.2,1062.7 L1541.2,1067.5 L1555.7,1073 C1570,1081 1585,1084.4 1598.2,1084.4 C1612,1084.4 1628,1081 1640.8,1073 L1655.2,1067.5 L1654.4,1062.7 L1644,1063.5 L1643.2,1019.3 C1638,1014 1634,1008 1633.6,1005.7 L1631.1,996 L1631.8,990 C1615,997 1580,997 1566,990 Z" fill="url(#gBase)"/>
<path d="M1551.7,1046 L1541.2,1061 L1541.2,1067.5 L1553,1072 Z" fill="#e6e6e6"/>
<path d="M1644,1046 L1655.2,1061 L1655.2,1067.5 L1643,1072 Z" fill="#d8d8d8"/>
<circle cx="1559.6" cy="1023" r="2" fill="#2a2a2a"/><circle cx="1635.4" cy="1023" r="2" fill="#2a2a2a"/>
<circle cx="1560.7" cy="1070.5" r="2" fill="#2a2a2a"/><circle cx="1636.5" cy="1070.5" r="2" fill="#2a2a2a"/>
<path d="M1551.7,1019 L1551.7,1063" stroke="#9a9a9a" stroke-width="0.8"/><path d="M1643.5,1019 L1643.5,1063" stroke="#9a9a9a" stroke-width="0.8"/>
<path d="M1566,990 C1580,996 1615,997 1631,990" fill="none" stroke="#6a6a6a" stroke-width="0.8"/>
<!-- ===== right gripper ===== -->
<path d="M1801,731 L1878,668 L1906,709 L1809,772 Z" fill="url(#gGripR)" stroke="#d2d2d2" stroke-width="6" stroke-linejoin="round"/>
<path d="M1815,744 L1872,705 L1878,716 L1820,755 Z" fill="#a4a4a4"/>
<path d="M1855,674 L1885,667 L1890,680 L1860,688 Z" fill="#262626"/>
<path d="M1848,742 L1875,736 L1880,774 L1866,779 Z" fill="#9c9c9c"/>
<path d="M1862,762 L1876,758 L1878,776 L1866,778 Z" fill="#202020"/>
<!-- ===== left gripper ===== -->
<path d="M1292,671 L1338,670 L1340,676 L1376,672 L1376,667.5 L1405,663 L1417,666 L1425,705 L1421,711 L1299,717 L1292,678 Z" fill="url(#gGrip)"/>
<path d="M1292,671 L1300,665 L1330,663 L1338,670 Z" fill="#1a1a1a" opacity="0.7"/>
<path d="M1417,666 L1425,705 L1421,711" fill="none" stroke="#151515" stroke-width="3"/>
<path d="M1312,677 L1402,672 L1403,690 L1313,695 Z" fill="#dde0e3"/>
<path d="M1357,733 L1372,731 L1373,745 L1358,746 Z" fill="#222"/>
<path d="M1350,718 L1358,734 M1380,718 L1371,734" stroke="#2a2a2a" stroke-width="2.5"/>

</svg></div>
</body></html>
